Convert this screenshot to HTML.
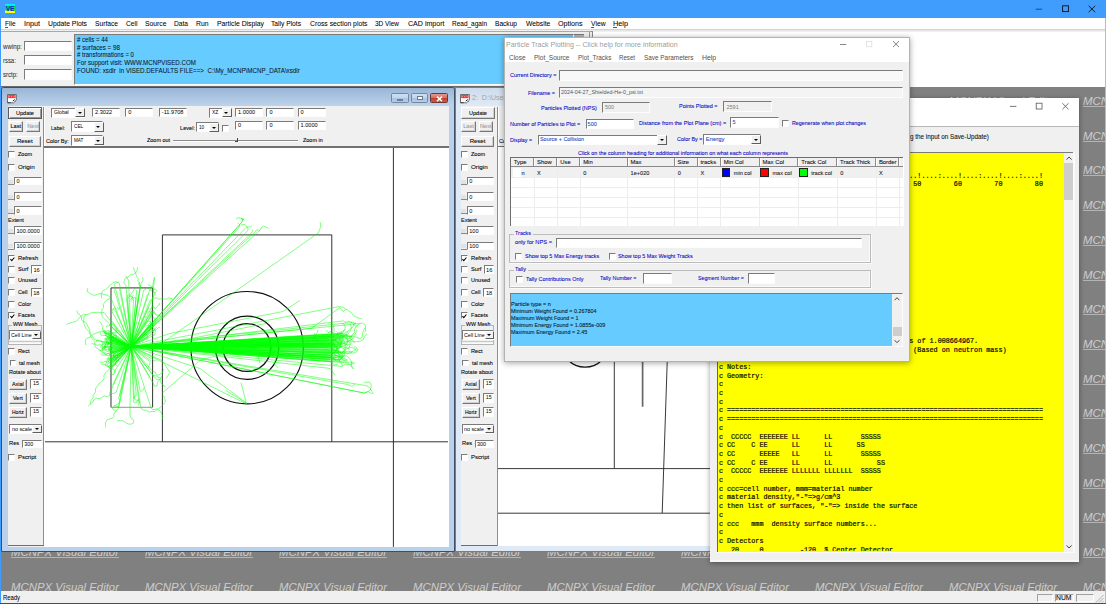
<!DOCTYPE html>
<html lang="en"><head><meta charset="utf-8"><title>MCNPX Visual Editor</title><style>
html,body{margin:0;padding:0}
body{width:1106px;height:604px;overflow:hidden;position:relative;background:#f0f0f0;font-family:"Liberation Sans",sans-serif;color:#000}
body>div,#mdi>div,body>svg{position:absolute}
div{position:absolute;box-sizing:border-box}
.t{position:absolute;white-space:pre;line-height:1.2;transform-origin:0 0;display:block;-webkit-text-stroke:0.09px currentColor}
.wm{position:absolute;white-space:pre;line-height:1;font-style:italic;color:#cdcdcd;text-decoration:underline;text-decoration-color:#b4b4b4;text-underline-offset:1.3px;text-decoration-thickness:0.9px;transform-origin:0 0;display:block}
.m{position:absolute;left:0;white-space:pre;line-height:1.2;font-family:"Liberation Mono",monospace;color:#101005;display:block;-webkit-text-stroke:0.22px #101005}
.sk{border:1px solid;border-color:#7b7b7b #fdfdfd #fdfdfd #7b7b7b}
.btn{background:#f0f0f0;border:1px solid;border-color:#fff #777 #777 #fff;box-shadow:inset -1px -1px 0 #d0d0d0}
.btn.dflt{border-color:#5c5c5c;box-shadow:inset 1px 1px 0 #fff,inset -1px -1px 0 #9a9a9a}
.cbtn{background:#f0f0f0;border:1px solid;border-color:#fff #5e5e5e #5e5e5e #fff}
.tri{position:absolute;width:0;height:0;border-left:2.5px solid transparent;border-right:2.5px solid transparent;border-top:2.5px solid #000}
</style></head><body>
<div id="mdi" style="left:1px;top:86px;width:1104px;height:505px;background:#808080;overflow:hidden;border-top:1px solid #696969">
<span class="wm" style="left:10px;top:9.09px;font-size:11.0px;transform:scaleX(1.0351)">MCNPX Visual Editor</span>
<span class="wm" style="left:144px;top:9.09px;font-size:11.0px;transform:scaleX(1.0351)">MCNPX Visual Editor</span>
<span class="wm" style="left:278px;top:9.09px;font-size:11.0px;transform:scaleX(1.0351)">MCNPX Visual Editor</span>
<span class="wm" style="left:412px;top:9.09px;font-size:11.0px;transform:scaleX(1.0351)">MCNPX Visual Editor</span>
<span class="wm" style="left:546px;top:9.09px;font-size:11.0px;transform:scaleX(1.0351)">MCNPX Visual Editor</span>
<span class="wm" style="left:680px;top:9.09px;font-size:11.0px;transform:scaleX(1.0351)">MCNPX Visual Editor</span>
<span class="wm" style="left:814px;top:9.09px;font-size:11.0px;transform:scaleX(1.0351)">MCNPX Visual Editor</span>
<span class="wm" style="left:948px;top:9.09px;font-size:11.0px;transform:scaleX(1.0351)">MCNPX Visual Editor</span>
<span class="wm" style="left:1082px;top:9.09px;font-size:11.0px;transform:scaleX(1.0351)">MCNPX Visual Editor</span>
<span class="wm" style="left:10px;top:43.79px;font-size:11.0px;transform:scaleX(1.0351)">MCNPX Visual Editor</span>
<span class="wm" style="left:144px;top:43.79px;font-size:11.0px;transform:scaleX(1.0351)">MCNPX Visual Editor</span>
<span class="wm" style="left:278px;top:43.79px;font-size:11.0px;transform:scaleX(1.0351)">MCNPX Visual Editor</span>
<span class="wm" style="left:412px;top:43.79px;font-size:11.0px;transform:scaleX(1.0351)">MCNPX Visual Editor</span>
<span class="wm" style="left:546px;top:43.79px;font-size:11.0px;transform:scaleX(1.0351)">MCNPX Visual Editor</span>
<span class="wm" style="left:680px;top:43.79px;font-size:11.0px;transform:scaleX(1.0351)">MCNPX Visual Editor</span>
<span class="wm" style="left:814px;top:43.79px;font-size:11.0px;transform:scaleX(1.0351)">MCNPX Visual Editor</span>
<span class="wm" style="left:948px;top:43.79px;font-size:11.0px;transform:scaleX(1.0351)">MCNPX Visual Editor</span>
<span class="wm" style="left:1082px;top:43.79px;font-size:11.0px;transform:scaleX(1.0351)">MCNPX Visual Editor</span>
<span class="wm" style="left:10px;top:78.49px;font-size:11.0px;transform:scaleX(1.0351)">MCNPX Visual Editor</span>
<span class="wm" style="left:144px;top:78.49px;font-size:11.0px;transform:scaleX(1.0351)">MCNPX Visual Editor</span>
<span class="wm" style="left:278px;top:78.49px;font-size:11.0px;transform:scaleX(1.0351)">MCNPX Visual Editor</span>
<span class="wm" style="left:412px;top:78.49px;font-size:11.0px;transform:scaleX(1.0351)">MCNPX Visual Editor</span>
<span class="wm" style="left:546px;top:78.49px;font-size:11.0px;transform:scaleX(1.0351)">MCNPX Visual Editor</span>
<span class="wm" style="left:680px;top:78.49px;font-size:11.0px;transform:scaleX(1.0351)">MCNPX Visual Editor</span>
<span class="wm" style="left:814px;top:78.49px;font-size:11.0px;transform:scaleX(1.0351)">MCNPX Visual Editor</span>
<span class="wm" style="left:948px;top:78.49px;font-size:11.0px;transform:scaleX(1.0351)">MCNPX Visual Editor</span>
<span class="wm" style="left:1082px;top:78.49px;font-size:11.0px;transform:scaleX(1.0351)">MCNPX Visual Editor</span>
<span class="wm" style="left:10px;top:113.19px;font-size:11.0px;transform:scaleX(1.0351)">MCNPX Visual Editor</span>
<span class="wm" style="left:144px;top:113.19px;font-size:11.0px;transform:scaleX(1.0351)">MCNPX Visual Editor</span>
<span class="wm" style="left:278px;top:113.19px;font-size:11.0px;transform:scaleX(1.0351)">MCNPX Visual Editor</span>
<span class="wm" style="left:412px;top:113.19px;font-size:11.0px;transform:scaleX(1.0351)">MCNPX Visual Editor</span>
<span class="wm" style="left:546px;top:113.19px;font-size:11.0px;transform:scaleX(1.0351)">MCNPX Visual Editor</span>
<span class="wm" style="left:680px;top:113.19px;font-size:11.0px;transform:scaleX(1.0351)">MCNPX Visual Editor</span>
<span class="wm" style="left:814px;top:113.19px;font-size:11.0px;transform:scaleX(1.0351)">MCNPX Visual Editor</span>
<span class="wm" style="left:948px;top:113.19px;font-size:11.0px;transform:scaleX(1.0351)">MCNPX Visual Editor</span>
<span class="wm" style="left:1082px;top:113.19px;font-size:11.0px;transform:scaleX(1.0351)">MCNPX Visual Editor</span>
<span class="wm" style="left:10px;top:147.89px;font-size:11.0px;transform:scaleX(1.0351)">MCNPX Visual Editor</span>
<span class="wm" style="left:144px;top:147.89px;font-size:11.0px;transform:scaleX(1.0351)">MCNPX Visual Editor</span>
<span class="wm" style="left:278px;top:147.89px;font-size:11.0px;transform:scaleX(1.0351)">MCNPX Visual Editor</span>
<span class="wm" style="left:412px;top:147.89px;font-size:11.0px;transform:scaleX(1.0351)">MCNPX Visual Editor</span>
<span class="wm" style="left:546px;top:147.89px;font-size:11.0px;transform:scaleX(1.0351)">MCNPX Visual Editor</span>
<span class="wm" style="left:680px;top:147.89px;font-size:11.0px;transform:scaleX(1.0351)">MCNPX Visual Editor</span>
<span class="wm" style="left:814px;top:147.89px;font-size:11.0px;transform:scaleX(1.0351)">MCNPX Visual Editor</span>
<span class="wm" style="left:948px;top:147.89px;font-size:11.0px;transform:scaleX(1.0351)">MCNPX Visual Editor</span>
<span class="wm" style="left:1082px;top:147.89px;font-size:11.0px;transform:scaleX(1.0351)">MCNPX Visual Editor</span>
<span class="wm" style="left:10px;top:182.59px;font-size:11.0px;transform:scaleX(1.0351)">MCNPX Visual Editor</span>
<span class="wm" style="left:144px;top:182.59px;font-size:11.0px;transform:scaleX(1.0351)">MCNPX Visual Editor</span>
<span class="wm" style="left:278px;top:182.59px;font-size:11.0px;transform:scaleX(1.0351)">MCNPX Visual Editor</span>
<span class="wm" style="left:412px;top:182.59px;font-size:11.0px;transform:scaleX(1.0351)">MCNPX Visual Editor</span>
<span class="wm" style="left:546px;top:182.59px;font-size:11.0px;transform:scaleX(1.0351)">MCNPX Visual Editor</span>
<span class="wm" style="left:680px;top:182.59px;font-size:11.0px;transform:scaleX(1.0351)">MCNPX Visual Editor</span>
<span class="wm" style="left:814px;top:182.59px;font-size:11.0px;transform:scaleX(1.0351)">MCNPX Visual Editor</span>
<span class="wm" style="left:948px;top:182.59px;font-size:11.0px;transform:scaleX(1.0351)">MCNPX Visual Editor</span>
<span class="wm" style="left:1082px;top:182.59px;font-size:11.0px;transform:scaleX(1.0351)">MCNPX Visual Editor</span>
<span class="wm" style="left:10px;top:217.29px;font-size:11.0px;transform:scaleX(1.0351)">MCNPX Visual Editor</span>
<span class="wm" style="left:144px;top:217.29px;font-size:11.0px;transform:scaleX(1.0351)">MCNPX Visual Editor</span>
<span class="wm" style="left:278px;top:217.29px;font-size:11.0px;transform:scaleX(1.0351)">MCNPX Visual Editor</span>
<span class="wm" style="left:412px;top:217.29px;font-size:11.0px;transform:scaleX(1.0351)">MCNPX Visual Editor</span>
<span class="wm" style="left:546px;top:217.29px;font-size:11.0px;transform:scaleX(1.0351)">MCNPX Visual Editor</span>
<span class="wm" style="left:680px;top:217.29px;font-size:11.0px;transform:scaleX(1.0351)">MCNPX Visual Editor</span>
<span class="wm" style="left:814px;top:217.29px;font-size:11.0px;transform:scaleX(1.0351)">MCNPX Visual Editor</span>
<span class="wm" style="left:948px;top:217.29px;font-size:11.0px;transform:scaleX(1.0351)">MCNPX Visual Editor</span>
<span class="wm" style="left:1082px;top:217.29px;font-size:11.0px;transform:scaleX(1.0351)">MCNPX Visual Editor</span>
<span class="wm" style="left:10px;top:251.99px;font-size:11.0px;transform:scaleX(1.0351)">MCNPX Visual Editor</span>
<span class="wm" style="left:144px;top:251.99px;font-size:11.0px;transform:scaleX(1.0351)">MCNPX Visual Editor</span>
<span class="wm" style="left:278px;top:251.99px;font-size:11.0px;transform:scaleX(1.0351)">MCNPX Visual Editor</span>
<span class="wm" style="left:412px;top:251.99px;font-size:11.0px;transform:scaleX(1.0351)">MCNPX Visual Editor</span>
<span class="wm" style="left:546px;top:251.99px;font-size:11.0px;transform:scaleX(1.0351)">MCNPX Visual Editor</span>
<span class="wm" style="left:680px;top:251.99px;font-size:11.0px;transform:scaleX(1.0351)">MCNPX Visual Editor</span>
<span class="wm" style="left:814px;top:251.99px;font-size:11.0px;transform:scaleX(1.0351)">MCNPX Visual Editor</span>
<span class="wm" style="left:948px;top:251.99px;font-size:11.0px;transform:scaleX(1.0351)">MCNPX Visual Editor</span>
<span class="wm" style="left:1082px;top:251.99px;font-size:11.0px;transform:scaleX(1.0351)">MCNPX Visual Editor</span>
<span class="wm" style="left:10px;top:286.69px;font-size:11.0px;transform:scaleX(1.0351)">MCNPX Visual Editor</span>
<span class="wm" style="left:144px;top:286.69px;font-size:11.0px;transform:scaleX(1.0351)">MCNPX Visual Editor</span>
<span class="wm" style="left:278px;top:286.69px;font-size:11.0px;transform:scaleX(1.0351)">MCNPX Visual Editor</span>
<span class="wm" style="left:412px;top:286.69px;font-size:11.0px;transform:scaleX(1.0351)">MCNPX Visual Editor</span>
<span class="wm" style="left:546px;top:286.69px;font-size:11.0px;transform:scaleX(1.0351)">MCNPX Visual Editor</span>
<span class="wm" style="left:680px;top:286.69px;font-size:11.0px;transform:scaleX(1.0351)">MCNPX Visual Editor</span>
<span class="wm" style="left:814px;top:286.69px;font-size:11.0px;transform:scaleX(1.0351)">MCNPX Visual Editor</span>
<span class="wm" style="left:948px;top:286.69px;font-size:11.0px;transform:scaleX(1.0351)">MCNPX Visual Editor</span>
<span class="wm" style="left:1082px;top:286.69px;font-size:11.0px;transform:scaleX(1.0351)">MCNPX Visual Editor</span>
<span class="wm" style="left:10px;top:321.39px;font-size:11.0px;transform:scaleX(1.0351)">MCNPX Visual Editor</span>
<span class="wm" style="left:144px;top:321.39px;font-size:11.0px;transform:scaleX(1.0351)">MCNPX Visual Editor</span>
<span class="wm" style="left:278px;top:321.39px;font-size:11.0px;transform:scaleX(1.0351)">MCNPX Visual Editor</span>
<span class="wm" style="left:412px;top:321.39px;font-size:11.0px;transform:scaleX(1.0351)">MCNPX Visual Editor</span>
<span class="wm" style="left:546px;top:321.39px;font-size:11.0px;transform:scaleX(1.0351)">MCNPX Visual Editor</span>
<span class="wm" style="left:680px;top:321.39px;font-size:11.0px;transform:scaleX(1.0351)">MCNPX Visual Editor</span>
<span class="wm" style="left:814px;top:321.39px;font-size:11.0px;transform:scaleX(1.0351)">MCNPX Visual Editor</span>
<span class="wm" style="left:948px;top:321.39px;font-size:11.0px;transform:scaleX(1.0351)">MCNPX Visual Editor</span>
<span class="wm" style="left:1082px;top:321.39px;font-size:11.0px;transform:scaleX(1.0351)">MCNPX Visual Editor</span>
<span class="wm" style="left:10px;top:356.09px;font-size:11.0px;transform:scaleX(1.0351)">MCNPX Visual Editor</span>
<span class="wm" style="left:144px;top:356.09px;font-size:11.0px;transform:scaleX(1.0351)">MCNPX Visual Editor</span>
<span class="wm" style="left:278px;top:356.09px;font-size:11.0px;transform:scaleX(1.0351)">MCNPX Visual Editor</span>
<span class="wm" style="left:412px;top:356.09px;font-size:11.0px;transform:scaleX(1.0351)">MCNPX Visual Editor</span>
<span class="wm" style="left:546px;top:356.09px;font-size:11.0px;transform:scaleX(1.0351)">MCNPX Visual Editor</span>
<span class="wm" style="left:680px;top:356.09px;font-size:11.0px;transform:scaleX(1.0351)">MCNPX Visual Editor</span>
<span class="wm" style="left:814px;top:356.09px;font-size:11.0px;transform:scaleX(1.0351)">MCNPX Visual Editor</span>
<span class="wm" style="left:948px;top:356.09px;font-size:11.0px;transform:scaleX(1.0351)">MCNPX Visual Editor</span>
<span class="wm" style="left:1082px;top:356.09px;font-size:11.0px;transform:scaleX(1.0351)">MCNPX Visual Editor</span>
<span class="wm" style="left:10px;top:390.79px;font-size:11.0px;transform:scaleX(1.0351)">MCNPX Visual Editor</span>
<span class="wm" style="left:144px;top:390.79px;font-size:11.0px;transform:scaleX(1.0351)">MCNPX Visual Editor</span>
<span class="wm" style="left:278px;top:390.79px;font-size:11.0px;transform:scaleX(1.0351)">MCNPX Visual Editor</span>
<span class="wm" style="left:412px;top:390.79px;font-size:11.0px;transform:scaleX(1.0351)">MCNPX Visual Editor</span>
<span class="wm" style="left:546px;top:390.79px;font-size:11.0px;transform:scaleX(1.0351)">MCNPX Visual Editor</span>
<span class="wm" style="left:680px;top:390.79px;font-size:11.0px;transform:scaleX(1.0351)">MCNPX Visual Editor</span>
<span class="wm" style="left:814px;top:390.79px;font-size:11.0px;transform:scaleX(1.0351)">MCNPX Visual Editor</span>
<span class="wm" style="left:948px;top:390.79px;font-size:11.0px;transform:scaleX(1.0351)">MCNPX Visual Editor</span>
<span class="wm" style="left:1082px;top:390.79px;font-size:11.0px;transform:scaleX(1.0351)">MCNPX Visual Editor</span>
<span class="wm" style="left:10px;top:425.49px;font-size:11.0px;transform:scaleX(1.0351)">MCNPX Visual Editor</span>
<span class="wm" style="left:144px;top:425.49px;font-size:11.0px;transform:scaleX(1.0351)">MCNPX Visual Editor</span>
<span class="wm" style="left:278px;top:425.49px;font-size:11.0px;transform:scaleX(1.0351)">MCNPX Visual Editor</span>
<span class="wm" style="left:412px;top:425.49px;font-size:11.0px;transform:scaleX(1.0351)">MCNPX Visual Editor</span>
<span class="wm" style="left:546px;top:425.49px;font-size:11.0px;transform:scaleX(1.0351)">MCNPX Visual Editor</span>
<span class="wm" style="left:680px;top:425.49px;font-size:11.0px;transform:scaleX(1.0351)">MCNPX Visual Editor</span>
<span class="wm" style="left:814px;top:425.49px;font-size:11.0px;transform:scaleX(1.0351)">MCNPX Visual Editor</span>
<span class="wm" style="left:948px;top:425.49px;font-size:11.0px;transform:scaleX(1.0351)">MCNPX Visual Editor</span>
<span class="wm" style="left:1082px;top:425.49px;font-size:11.0px;transform:scaleX(1.0351)">MCNPX Visual Editor</span>
<span class="wm" style="left:10px;top:460.19px;font-size:11.0px;transform:scaleX(1.0351)">MCNPX Visual Editor</span>
<span class="wm" style="left:144px;top:460.19px;font-size:11.0px;transform:scaleX(1.0351)">MCNPX Visual Editor</span>
<span class="wm" style="left:278px;top:460.19px;font-size:11.0px;transform:scaleX(1.0351)">MCNPX Visual Editor</span>
<span class="wm" style="left:412px;top:460.19px;font-size:11.0px;transform:scaleX(1.0351)">MCNPX Visual Editor</span>
<span class="wm" style="left:546px;top:460.19px;font-size:11.0px;transform:scaleX(1.0351)">MCNPX Visual Editor</span>
<span class="wm" style="left:680px;top:460.19px;font-size:11.0px;transform:scaleX(1.0351)">MCNPX Visual Editor</span>
<span class="wm" style="left:814px;top:460.19px;font-size:11.0px;transform:scaleX(1.0351)">MCNPX Visual Editor</span>
<span class="wm" style="left:948px;top:460.19px;font-size:11.0px;transform:scaleX(1.0351)">MCNPX Visual Editor</span>
<span class="wm" style="left:1082px;top:460.19px;font-size:11.0px;transform:scaleX(1.0351)">MCNPX Visual Editor</span>
<span class="wm" style="left:10px;top:494.89px;font-size:11.0px;transform:scaleX(1.0351)">MCNPX Visual Editor</span>
<span class="wm" style="left:144px;top:494.89px;font-size:11.0px;transform:scaleX(1.0351)">MCNPX Visual Editor</span>
<span class="wm" style="left:278px;top:494.89px;font-size:11.0px;transform:scaleX(1.0351)">MCNPX Visual Editor</span>
<span class="wm" style="left:412px;top:494.89px;font-size:11.0px;transform:scaleX(1.0351)">MCNPX Visual Editor</span>
<span class="wm" style="left:546px;top:494.89px;font-size:11.0px;transform:scaleX(1.0351)">MCNPX Visual Editor</span>
<span class="wm" style="left:680px;top:494.89px;font-size:11.0px;transform:scaleX(1.0351)">MCNPX Visual Editor</span>
<span class="wm" style="left:814px;top:494.89px;font-size:11.0px;transform:scaleX(1.0351)">MCNPX Visual Editor</span>
<span class="wm" style="left:948px;top:494.89px;font-size:11.0px;transform:scaleX(1.0351)">MCNPX Visual Editor</span>
<span class="wm" style="left:1082px;top:494.89px;font-size:11.0px;transform:scaleX(1.0351)">MCNPX Visual Editor</span>
</div>
<div style="left:0.00px;top:0.00px;width:1106.00px;height:18.30px;background:#409dfd;"></div>
<div style="left:0.00px;top:0.00px;width:1.00px;height:604.00px;background:#409dfd;"></div>
<div style="left:1105.00px;top:18.00px;width:1.00px;height:586.00px;background:#8ec4ff;"></div>
<div style="left:0.00px;top:603.00px;width:1106.00px;height:1.00px;background:#4c4c4c;z-index:5;"></div>
<div style="left:5.10px;top:4.00px;width:9.70px;height:9.20px;background:linear-gradient(#00f6ff 0%,#00f6ff 14%,#08e030 22%,#08e030 68%,#ffff00 78%,#ffff00 100%);overflow:hidden;"><span style="position:absolute;left:0.7px;top:1.2px;font:bold 6.6px/7px 'Liberation Sans',sans-serif;color:#0a22d0;letter-spacing:-0.3px">VE</span></div>
<svg style="position:absolute;left:1020px;top:0" width="86" height="18" viewBox="0 0 86 18"><g stroke="#101010" stroke-width="0.9" fill="none"><path d="M15.7 9.2H22" stroke="#174a86" stroke-width="1"/><rect x="42.6" y="5.8" width="5.8" height="5.8"/><path d="M68.6 5.8L75.2 12.2M75.2 5.8L68.6 12.2"/></g></svg>
<div style="left:1.00px;top:18.30px;width:1104.00px;height:12.20px;background:#fff;"></div>
<span class="t" style="left:5.00px;top:18.85px;font-size:7.5px;color:#000;transform:scaleX(0.8688);-webkit-text-stroke:0.05px;">File</span>
<span class="t" style="left:23.50px;top:18.85px;font-size:7.5px;color:#000;transform:scaleX(0.9592);-webkit-text-stroke:0.05px;">Input</span>
<span class="t" style="left:47.50px;top:18.85px;font-size:7.5px;color:#000;transform:scaleX(0.9082);-webkit-text-stroke:0.05px;">Update Plots</span>
<span class="t" style="left:94.50px;top:18.85px;font-size:7.5px;color:#000;transform:scaleX(0.8898);-webkit-text-stroke:0.05px;">Surface</span>
<span class="t" style="left:125.50px;top:18.85px;font-size:7.5px;color:#000;transform:scaleX(0.8901);-webkit-text-stroke:0.05px;">Cell</span>
<span class="t" style="left:145.00px;top:18.85px;font-size:7.5px;color:#000;transform:scaleX(0.9047);-webkit-text-stroke:0.05px;">Source</span>
<span class="t" style="left:174.00px;top:18.85px;font-size:7.5px;color:#000;transform:scaleX(0.8837);-webkit-text-stroke:0.05px;">Data</span>
<span class="t" style="left:196.00px;top:18.85px;font-size:7.5px;color:#000;transform:scaleX(0.9085);-webkit-text-stroke:0.05px;">Run</span>
<span class="t" style="left:216.50px;top:18.85px;font-size:7.5px;color:#000;transform:scaleX(0.9094);-webkit-text-stroke:0.05px;">Particle Display</span>
<span class="t" style="left:271.00px;top:18.85px;font-size:7.5px;color:#000;transform:scaleX(0.8886);-webkit-text-stroke:0.05px;">Tally Plots</span>
<span class="t" style="left:309.50px;top:18.85px;font-size:7.5px;color:#000;transform:scaleX(0.9075);-webkit-text-stroke:0.05px;">Cross section plots</span>
<span class="t" style="left:375.00px;top:18.85px;font-size:7.5px;color:#000;transform:scaleX(0.8635);-webkit-text-stroke:0.05px;">3D View</span>
<span class="t" style="left:407.50px;top:18.85px;font-size:7.5px;color:#000;transform:scaleX(0.9418);-webkit-text-stroke:0.05px;">CAD import</span>
<span class="t" style="left:452.00px;top:18.85px;font-size:7.5px;color:#000;transform:scaleX(0.8652);-webkit-text-stroke:0.05px;">Read_again</span>
<span class="t" style="left:495.00px;top:18.85px;font-size:7.5px;color:#000;transform:scaleX(0.8794);-webkit-text-stroke:0.05px;">Backup</span>
<span class="t" style="left:525.70px;top:18.85px;font-size:7.5px;color:#000;transform:scaleX(0.9014);-webkit-text-stroke:0.05px;">Website</span>
<span class="t" style="left:558.00px;top:18.85px;font-size:7.5px;color:#000;transform:scaleX(0.9479);-webkit-text-stroke:0.05px;">Options</span>
<span class="t" style="left:590.50px;top:18.85px;font-size:7.5px;color:#000;transform:scaleX(0.8994);-webkit-text-stroke:0.05px;">View</span>
<span class="t" style="left:613.00px;top:18.85px;font-size:7.5px;color:#000;transform:scaleX(0.9724);-webkit-text-stroke:0.05px;">Help</span>
<div style="left:5.00px;top:27.00px;width:3.20px;height:0.60px;background:#555;"></div>
<div style="left:590.50px;top:27.00px;width:3.80px;height:0.60px;background:#555;"></div>
<div style="left:613.00px;top:27.00px;width:4.40px;height:0.60px;background:#555;"></div>
<div style="left:1.00px;top:29.00px;width:1104.00px;height:0.90px;background:#d4d4d4;"></div>
<div style="left:1.00px;top:31.30px;width:591.00px;height:0.90px;background:#a8a8a8;"></div>
<div style="left:592.00px;top:31.50px;width:513.00px;height:55.00px;background:#fff;"></div>
<div style="left:593.00px;top:30.40px;width:512.00px;height:0.70px;background:#e6e6e6;"></div>
<div style="left:591.20px;top:30.50px;width:1.60px;height:6.50px;background:#8a8a8a;"></div>
<div style="left:1.00px;top:32.20px;width:590.50px;height:54.00px;background:#f0f0f0;"></div>
<span class="t" style="left:3.20px;top:42.89px;font-size:6.3px;color:#222;transform:scaleX(0.9763);-webkit-text-stroke:0;">wwinp:</span>
<div class="sk" style="left:24.00px;top:40.70px;width:47.50px;height:10.60px;background:#fff;"></div>
<span class="t" style="left:3.20px;top:56.89px;font-size:6.3px;color:#222;transform:scaleX(0.9376);-webkit-text-stroke:0;">rssa:</span>
<div class="sk" style="left:24.00px;top:55.00px;width:47.50px;height:10.30px;background:#fff;"></div>
<span class="t" style="left:3.20px;top:71.09px;font-size:6.3px;color:#222;transform:scaleX(0.9609);-webkit-text-stroke:0;">srctp:</span>
<div class="sk" style="left:24.00px;top:69.00px;width:47.50px;height:10.50px;background:#fff;"></div>
<div style="left:573.20px;top:34.40px;width:10.40px;height:50.00px;background:#b6b6b6;border-top:1px solid #7b7b7b;"></div>
<div style="left:589.20px;top:32.20px;width:0.80px;height:54.00px;background:#9a9a9a;"></div>
<div class="sk" style="left:74.30px;top:34.40px;width:500.00px;height:50.20px;background:#66ccff;"></div>
<span class="t" style="left:76.50px;top:36.31px;font-size:6.6px;color:#10141c;transform:scaleX(0.9234);-webkit-text-stroke:0.06px;"># cells = 44</span>
<span class="t" style="left:76.50px;top:43.86px;font-size:6.6px;color:#10141c;transform:scaleX(0.9490);-webkit-text-stroke:0.06px;"># surfaces = 98</span>
<span class="t" style="left:76.50px;top:51.41px;font-size:6.6px;color:#10141c;transform:scaleX(0.9167);-webkit-text-stroke:0.06px;"># transformations = 0</span>
<span class="t" style="left:76.50px;top:58.96px;font-size:6.6px;color:#10141c;transform:scaleX(0.9352);-webkit-text-stroke:0.06px;">For support visit: WWW.MCNPVISED.COM</span>
<span class="t" style="left:76.50px;top:66.51px;font-size:6.6px;color:#10141c;transform:scaleX(0.9464);-webkit-text-stroke:0.06px;">FOUND: xsdir  in VISED.DEFAULTS FILE==&gt;  C:\My_MCNP\MCNP_DATA\xsdir</span>
<div style="left:455.00px;top:87.00px;width:450.00px;height:465.00px;background:#dfeaf6;border:1px solid #6f7f92;box-sizing:border-box;border-radius:3px 3px 0 0;"></div>
<div style="left:456.00px;top:88.00px;width:448.00px;height:18.00px;background:linear-gradient(#cddbec,#e0eaf6);"></div>
<svg style="position:absolute;left:459.9px;top:93.5px" width="10.5" height="10" viewBox="0 0 10.5 10"><path d="M0.5 0.5H9.3V6.2L6.6 8.8H0.5Z" fill="#fff" stroke="#606060" stroke-width="0.9"/><rect x="1.2" y="1.1" width="7.3" height="3" fill="#ff2a2a"/><path d="M1.8 2.7H8.2" stroke="#fff" stroke-width="0.6" stroke-dasharray="1.1 1.3"/><path d="M0.7 8.7H4" stroke="#111" stroke-width="0.9" stroke-dasharray="1.1 0.6"/><path d="M5.8 7L7.8 5.6" stroke="#222" stroke-width="1"/><circle cx="8.4" cy="7.4" r="0.55" fill="#1f9f9f"/></svg>
<span class="t" style="left:472.00px;top:93.80px;font-size:7.1px;color:#a4a4a4;-webkit-text-stroke:0;">2:  D:\Users\MCNP\Shielded-He-0</span>
<div style="left:461.00px;top:106.40px;width:438.00px;height:440.00px;background:#f0f0f0;"></div>
<div style="left:498.00px;top:145.60px;width:401.00px;height:400.80px;background:#fff;border-top:1.6px solid #707070;box-sizing:border-box;"></div>
<div style="left:496.60px;top:107.00px;width:1.00px;height:439.40px;background:#8e8e8e;"></div>
<div style="left:497.60px;top:107.00px;width:0.80px;height:39.00px;background:#fff;"></div>
<div style="left:461.00px;top:544.60px;width:36.00px;height:1.00px;background:#6e6e6e;"></div>
<div class="btn" style="left:460.80px;top:107.30px;width:33.90px;height:11.50px;"></div>
<span class="t" style="left:468.85px;top:109.53px;font-size:6.0px;color:#000;transform:scaleX(0.9200);">Update</span>
<div class="btn" style="left:461.30px;top:121.20px;width:14.40px;height:10.80px;"></div>
<span class="t" style="left:463.21px;top:123.33px;font-size:5.6px;color:#9a9a9a;">Last</span>
<div class="btn" style="left:478.70px;top:121.20px;width:14.20px;height:10.80px;"></div>
<span class="t" style="left:480.04px;top:123.33px;font-size:5.6px;color:#9a9a9a;">Next</span>
<div class="btn" style="left:461.30px;top:136.40px;width:32.40px;height:10.60px;"></div>
<span class="t" style="left:469.66px;top:138.18px;font-size:6.0px;color:#000;">Reset</span>
<div class="sk" style="left:460.90px;top:151.00px;width:6.80px;height:6.80px;background:#fff;"></div>
<span class="t" style="left:470.60px;top:150.68px;font-size:6.0px;transform:scaleX(0.9193);">Zoom</span>
<div class="sk" style="left:460.90px;top:163.80px;width:6.80px;height:6.80px;background:#fff;"></div>
<span class="t" style="left:470.60px;top:163.58px;font-size:6.0px;transform:scaleX(1.0371);">Origin</span>
<div style="left:461.10px;top:179.70px;width:4.60px;height:4.20px;background:#e2e2e2;"></div>
<div style="left:460.90px;top:183.90px;width:6.00px;height:0.80px;background:#8a8a8a;"></div>
<div class="sk" style="left:466.60px;top:176.70px;width:27.80px;height:8.60px;background:#fff;"></div>
<span class="t" style="left:469.20px;top:178.33px;font-size:5.6px;color:#000;-webkit-text-stroke:0;">0</span>
<div style="left:461.10px;top:194.90px;width:4.60px;height:4.20px;background:#e2e2e2;"></div>
<div style="left:460.90px;top:199.10px;width:6.00px;height:0.80px;background:#8a8a8a;"></div>
<div class="sk" style="left:466.60px;top:192.00px;width:27.80px;height:8.50px;background:#fff;"></div>
<span class="t" style="left:469.20px;top:193.58px;font-size:5.6px;color:#000;-webkit-text-stroke:0;">0</span>
<div style="left:461.10px;top:209.20px;width:4.60px;height:4.20px;background:#e2e2e2;"></div>
<div style="left:460.90px;top:213.40px;width:6.00px;height:0.80px;background:#8a8a8a;"></div>
<div class="sk" style="left:466.60px;top:206.10px;width:27.80px;height:8.70px;background:#fff;"></div>
<span class="t" style="left:469.20px;top:207.78px;font-size:5.6px;color:#000;-webkit-text-stroke:0;">0</span>
<span class="t" style="left:460.90px;top:216.88px;font-size:6.0px;transform:scaleX(0.9289);">Extent</span>
<div style="left:461.10px;top:229.20px;width:4.60px;height:4.20px;background:#e2e2e2;"></div>
<div style="left:460.90px;top:233.40px;width:6.00px;height:0.80px;background:#8a8a8a;"></div>
<div class="sk" style="left:466.60px;top:226.20px;width:27.80px;height:8.60px;background:#fff;"></div>
<span class="t" style="left:469.20px;top:227.83px;font-size:5.6px;color:#000;-webkit-text-stroke:0;">100</span>
<div style="left:461.10px;top:244.30px;width:4.60px;height:4.20px;background:#e2e2e2;"></div>
<div style="left:460.90px;top:248.50px;width:6.00px;height:0.80px;background:#8a8a8a;"></div>
<div class="sk" style="left:466.60px;top:241.50px;width:27.80px;height:8.40px;background:#fff;"></div>
<span class="t" style="left:469.20px;top:243.03px;font-size:5.6px;color:#000;-webkit-text-stroke:0;">100</span>
<div class="sk" style="left:460.90px;top:255.30px;width:6.80px;height:6.80px;background:#fff;"><svg width="7" height="7" viewBox="0 0 7 7" style="position:absolute;left:-0.5px;top:-0.5px"><path d="M1.4 3.1 L2.8 4.6 L5.4 1.5" stroke="#000" stroke-width="1.05" fill="none"/></svg></div>
<span class="t" style="left:470.60px;top:255.08px;font-size:6.0px;transform:scaleX(0.9567);">Refresh</span>
<div class="sk" style="left:460.90px;top:266.30px;width:6.80px;height:6.80px;background:#fff;"></div>
<span class="t" style="left:470.60px;top:265.98px;font-size:6.0px;transform:scaleX(0.9451);">Surf</span>
<div class="sk" style="left:483.70px;top:265.00px;width:10.70px;height:8.90px;background:#fff;"></div>
<span class="t" style="left:486.10px;top:266.72px;font-size:5.7px;color:#000;-webkit-text-stroke:0;">16</span>
<div class="sk" style="left:460.90px;top:277.40px;width:6.80px;height:6.80px;background:#fff;"></div>
<span class="t" style="left:470.60px;top:277.08px;font-size:6.0px;transform:scaleX(0.9235);">Unused</span>
<div class="sk" style="left:460.90px;top:289.00px;width:6.80px;height:6.80px;background:#fff;"></div>
<span class="t" style="left:470.60px;top:288.68px;font-size:6.0px;transform:scaleX(0.9094);">Cell</span>
<div class="sk" style="left:483.30px;top:287.90px;width:11.10px;height:9.00px;background:#fff;"></div>
<span class="t" style="left:485.90px;top:289.67px;font-size:5.7px;color:#000;-webkit-text-stroke:0;">18</span>
<div class="sk" style="left:460.90px;top:300.90px;width:6.80px;height:6.80px;background:#fff;"></div>
<span class="t" style="left:470.60px;top:300.58px;font-size:6.0px;transform:scaleX(0.9136);">Color</span>
<div class="sk" style="left:460.90px;top:312.10px;width:6.80px;height:6.80px;background:#fff;"><svg width="7" height="7" viewBox="0 0 7 7" style="position:absolute;left:-0.5px;top:-0.5px"><path d="M1.4 3.1 L2.8 4.6 L5.4 1.5" stroke="#000" stroke-width="1.05" fill="none"/></svg></div>
<span class="t" style="left:470.60px;top:311.68px;font-size:6.0px;transform:scaleX(0.9497);">Facets</span>
<div style="left:460.90px;top:324.70px;width:33.50px;height:20.50px;border:1px solid #b4b4b4;box-sizing:border-box;box-shadow:inset 0 -1px 0 #fafafa;"></div>
<div style="left:465.10px;top:321.00px;width:26.00px;height:6.00px;background:#f0f0f0;"></div>
<span class="t" style="left:465.90px;top:320.73px;font-size:5.6px;transform:scaleX(0.9488);">WW Mesh</span>
<div class="sk" style="left:461.50px;top:330.00px;width:32.50px;height:9.60px;background:#fff;"></div>
<span class="t" style="left:464.00px;top:331.51px;font-size:5.3px;color:#000;transform:scaleX(0.9989);-webkit-text-stroke:0;">Cell Line</span>
<div class="cbtn" style="left:484.80px;top:330.80px;width:9.40px;height:8.40px;"><i class="tri" style="left:1.40px;top:2.50px"></i></div>
<div style="left:461.90px;top:340.60px;width:31.50px;height:0.70px;background:#c8c8c8;"></div>
<div class="sk" style="left:460.90px;top:348.20px;width:6.80px;height:6.80px;background:#fff;"></div>
<span class="t" style="left:470.60px;top:348.28px;font-size:6.0px;transform:scaleX(0.9403);">Rect</span>
<div class="sk" style="left:462.20px;top:360.00px;width:6.40px;height:6.40px;background:#fff;"></div>
<span class="t" style="left:471.50px;top:359.83px;font-size:5.6px;transform:scaleX(0.9875);">tal mesh</span>
<span class="t" style="left:461.30px;top:369.20px;font-size:5.8px;transform:scaleX(0.9544);">Rotate about</span>
<div class="btn" style="left:461.70px;top:378.50px;width:18.10px;height:11.20px;"></div>
<span class="t" style="left:464.90px;top:380.83px;font-size:5.6px;color:#000;transform:scaleX(0.9639);">Axial</span>
<div class="sk" style="left:482.90px;top:378.50px;width:11.50px;height:10.50px;background:#fff;"></div>
<span class="t" style="left:485.70px;top:379.70px;font-size:5.4px;color:#000;-webkit-text-stroke:0;">15</span>
<div class="btn" style="left:461.70px;top:392.70px;width:18.10px;height:11.20px;"></div>
<span class="t" style="left:465.85px;top:395.03px;font-size:5.6px;color:#000;transform:scaleX(0.9838);">Vert</span>
<div class="sk" style="left:482.90px;top:392.70px;width:11.50px;height:10.50px;background:#fff;"></div>
<span class="t" style="left:485.70px;top:393.90px;font-size:5.4px;color:#000;-webkit-text-stroke:0;">15</span>
<div class="btn" style="left:461.70px;top:406.60px;width:18.10px;height:11.20px;"></div>
<span class="t" style="left:464.90px;top:408.93px;font-size:5.6px;color:#000;transform:scaleX(0.8953);">Horiz</span>
<div class="sk" style="left:482.90px;top:406.60px;width:11.50px;height:10.50px;background:#fff;"></div>
<span class="t" style="left:485.70px;top:407.80px;font-size:5.4px;color:#000;-webkit-text-stroke:0;">15</span>
<div class="sk" style="left:461.70px;top:423.80px;width:32.50px;height:9.80px;background:#fff;"></div>
<span class="t" style="left:464.20px;top:426.21px;font-size:5.3px;color:#000;transform:scaleX(1.0081);-webkit-text-stroke:0;">no scale</span>
<div class="cbtn" style="left:485.00px;top:424.60px;width:9.40px;height:8.60px;"><i class="tri" style="left:1.40px;top:2.60px"></i></div>
<span class="t" style="left:461.50px;top:440.48px;font-size:6.0px;transform:scaleX(0.9559);">Res</span>
<div class="sk" style="left:474.70px;top:439.60px;width:19.70px;height:8.40px;background:#fff;"></div>
<span class="t" style="left:476.90px;top:440.65px;font-size:5.4px;color:#000;-webkit-text-stroke:0;">300</span>
<div class="sk" style="left:460.90px;top:454.40px;width:6.80px;height:6.80px;background:#fff;"></div>
<span class="t" style="left:470.60px;top:454.30px;font-size:5.8px;transform:scaleX(1.0211);">Pscript</span>
<span class="t" style="left:499.00px;top:137.88px;font-size:6.0px;transform:scaleX(0.9321);">Color By:</span>
<svg style="position:absolute;left:498px;top:148px" width="412" height="398" viewBox="498 148 412 398"><g fill="none" stroke="#222" stroke-width="0.9"><path d="M614.3 148V468.5"/><path d="M498 468.6H910"/><path d="M498 513.2H910"/><path d="M667.6 350L662.2 513"/><circle cx="585.1" cy="343.5" r="23.7" stroke="#111" stroke-width="1.3"/></g><path d="M642.6 148V406.8" stroke="#666" stroke-width="1.7"/></svg>
<div style="left:1.30px;top:87.00px;width:453.30px;height:465.00px;background:#b9d1ea;border:1px solid #3f4f63;box-sizing:border-box;border-radius:3px 3px 0 0;"></div>
<div style="left:2.30px;top:88.00px;width:451.30px;height:18.20px;background:linear-gradient(#99b6d8,#bdd3eb);border-radius:2px 2px 0 0;"></div>
<svg style="position:absolute;left:6.7px;top:93.5px" width="10.5" height="10" viewBox="0 0 10.5 10"><path d="M0.5 0.5H9.3V6.2L6.6 8.8H0.5Z" fill="#fff" stroke="#606060" stroke-width="0.9"/><rect x="1.2" y="1.1" width="7.3" height="3" fill="#ff2a2a"/><path d="M1.8 2.7H8.2" stroke="#fff" stroke-width="0.6" stroke-dasharray="1.1 1.3"/><path d="M0.7 8.7H4" stroke="#111" stroke-width="0.9" stroke-dasharray="1.1 0.6"/><path d="M5.8 7L7.8 5.6" stroke="#222" stroke-width="1"/><circle cx="8.4" cy="7.4" r="0.55" fill="#1f9f9f"/></svg>
<div style="left:390.70px;top:93.00px;width:18.10px;height:10.40px;background:linear-gradient(#cddef1 0%,#c2d6ec 48%,#a9c3e2 52%,#b4cce8 100%);border:1px solid #74879f;box-sizing:border-box;border-radius:1.5px;"><i style="position:absolute;left:5.4px;top:5.2px;width:6.2px;height:2.2px;background:#fff;border:0.6px solid #6f7f92;box-sizing:border-box"></i></div>
<div style="left:410.60px;top:93.00px;width:17.80px;height:10.40px;background:linear-gradient(#cddef1 0%,#c2d6ec 48%,#a9c3e2 52%,#b4cce8 100%);border:1px solid #74879f;box-sizing:border-box;border-radius:1.5px;"><i style="position:absolute;left:5.6px;top:2.2px;width:5.4px;height:4.2px;border:0.7px solid #6a788a;border-top-width:1.3px;box-sizing:border-box;background:#f4f8ff"></i></div>
<div style="left:430.20px;top:93.00px;width:18.30px;height:10.40px;background:linear-gradient(#e09a8e 0%,#d4705f 48%,#bf3f2c 52%,#cc5a45 100%);border:1px solid #6b3a38;box-sizing:border-box;border-radius:1.5px;"><svg style="position:absolute;left:5.2px;top:1.6px" width="7" height="6" viewBox="0 0 7 6"><path d="M1 0.6L6 5.2M6 0.6L1 5.2" stroke="#fff" stroke-width="1.5"/></svg></div>
<div style="left:7.70px;top:106.20px;width:441.50px;height:440.40px;background:#f0f0f0;"></div>
<div style="left:44.40px;top:147.00px;width:404.80px;height:399.60px;background:#fff;"></div>
<div style="left:44.40px;top:146.00px;width:404.80px;height:1.60px;background:#707070;"></div>
<div style="left:43.20px;top:107.00px;width:1.00px;height:439.00px;background:#8e8e8e;"></div>
<div style="left:44.40px;top:107.00px;width:0.80px;height:39.00px;background:#fff;"></div>
<div style="left:8.00px;top:544.80px;width:36.00px;height:1.00px;background:#6e6e6e;"></div>
<div class="btn dflt" style="left:8.10px;top:107.30px;width:33.90px;height:11.50px;"></div>
<span class="t" style="left:16.15px;top:109.53px;font-size:6.0px;color:#000;transform:scaleX(0.9200);">Update</span>
<div class="btn" style="left:8.60px;top:121.20px;width:14.40px;height:10.80px;"></div>
<span class="t" style="left:10.51px;top:123.33px;font-size:5.6px;color:#000;">Last</span>
<div class="btn" style="left:26.00px;top:121.20px;width:14.20px;height:10.80px;"></div>
<span class="t" style="left:27.34px;top:123.33px;font-size:5.6px;color:#9a9a9a;">Next</span>
<div class="btn" style="left:8.60px;top:136.40px;width:32.40px;height:10.60px;"></div>
<span class="t" style="left:16.96px;top:138.18px;font-size:6.0px;color:#000;">Reset</span>
<div class="sk" style="left:8.20px;top:151.00px;width:6.80px;height:6.80px;background:#fff;"></div>
<span class="t" style="left:17.90px;top:150.68px;font-size:6.0px;transform:scaleX(0.9193);">Zoom</span>
<div class="sk" style="left:8.20px;top:163.80px;width:6.80px;height:6.80px;background:#fff;"></div>
<span class="t" style="left:17.90px;top:163.58px;font-size:6.0px;transform:scaleX(1.0371);">Origin</span>
<div style="left:8.40px;top:179.70px;width:4.60px;height:4.20px;background:#e2e2e2;"></div>
<div style="left:8.20px;top:183.90px;width:6.00px;height:0.80px;background:#8a8a8a;"></div>
<div class="sk" style="left:13.90px;top:176.70px;width:27.80px;height:8.60px;background:#fff;"></div>
<span class="t" style="left:16.50px;top:178.33px;font-size:5.6px;color:#000;-webkit-text-stroke:0;">0</span>
<div style="left:8.40px;top:194.90px;width:4.60px;height:4.20px;background:#e2e2e2;"></div>
<div style="left:8.20px;top:199.10px;width:6.00px;height:0.80px;background:#8a8a8a;"></div>
<div class="sk" style="left:13.90px;top:192.00px;width:27.80px;height:8.50px;background:#fff;"></div>
<span class="t" style="left:16.50px;top:193.58px;font-size:5.6px;color:#000;-webkit-text-stroke:0;">0</span>
<div style="left:8.40px;top:209.20px;width:4.60px;height:4.20px;background:#e2e2e2;"></div>
<div style="left:8.20px;top:213.40px;width:6.00px;height:0.80px;background:#8a8a8a;"></div>
<div class="sk" style="left:13.90px;top:206.10px;width:27.80px;height:8.70px;background:#fff;"></div>
<span class="t" style="left:16.50px;top:207.78px;font-size:5.6px;color:#000;-webkit-text-stroke:0;">0</span>
<span class="t" style="left:8.20px;top:216.88px;font-size:6.0px;transform:scaleX(0.9289);">Extent</span>
<div style="left:8.40px;top:229.20px;width:4.60px;height:4.20px;background:#e2e2e2;"></div>
<div style="left:8.20px;top:233.40px;width:6.00px;height:0.80px;background:#8a8a8a;"></div>
<div class="sk" style="left:13.90px;top:226.20px;width:27.80px;height:8.60px;background:#fff;"></div>
<span class="t" style="left:16.50px;top:227.83px;font-size:5.6px;color:#000;-webkit-text-stroke:0;">100.0000</span>
<div style="left:8.40px;top:244.30px;width:4.60px;height:4.20px;background:#e2e2e2;"></div>
<div style="left:8.20px;top:248.50px;width:6.00px;height:0.80px;background:#8a8a8a;"></div>
<div class="sk" style="left:13.90px;top:241.50px;width:27.80px;height:8.40px;background:#fff;"></div>
<span class="t" style="left:16.50px;top:243.03px;font-size:5.6px;color:#000;-webkit-text-stroke:0;">100.0000</span>
<div class="sk" style="left:8.20px;top:255.30px;width:6.80px;height:6.80px;background:#fff;"><svg width="7" height="7" viewBox="0 0 7 7" style="position:absolute;left:-0.5px;top:-0.5px"><path d="M1.4 3.1 L2.8 4.6 L5.4 1.5" stroke="#000" stroke-width="1.05" fill="none"/></svg></div>
<span class="t" style="left:17.90px;top:255.08px;font-size:6.0px;transform:scaleX(0.9567);">Refresh</span>
<div class="sk" style="left:8.20px;top:266.30px;width:6.80px;height:6.80px;background:#fff;"></div>
<span class="t" style="left:17.90px;top:265.98px;font-size:6.0px;transform:scaleX(0.9451);">Surf</span>
<div class="sk" style="left:31.00px;top:265.00px;width:10.70px;height:8.90px;background:#fff;"></div>
<span class="t" style="left:33.40px;top:266.72px;font-size:5.7px;color:#000;-webkit-text-stroke:0;">16</span>
<div class="sk" style="left:8.20px;top:277.40px;width:6.80px;height:6.80px;background:#fff;"></div>
<span class="t" style="left:17.90px;top:277.08px;font-size:6.0px;transform:scaleX(0.9235);">Unused</span>
<div class="sk" style="left:8.20px;top:289.00px;width:6.80px;height:6.80px;background:#fff;"></div>
<span class="t" style="left:17.90px;top:288.68px;font-size:6.0px;transform:scaleX(0.9094);">Cell</span>
<div class="sk" style="left:30.60px;top:287.90px;width:11.10px;height:9.00px;background:#fff;"></div>
<span class="t" style="left:33.20px;top:289.67px;font-size:5.7px;color:#000;-webkit-text-stroke:0;">18</span>
<div class="sk" style="left:8.20px;top:300.90px;width:6.80px;height:6.80px;background:#fff;"></div>
<span class="t" style="left:17.90px;top:300.58px;font-size:6.0px;transform:scaleX(0.9136);">Color</span>
<div class="sk" style="left:8.20px;top:312.10px;width:6.80px;height:6.80px;background:#fff;"><svg width="7" height="7" viewBox="0 0 7 7" style="position:absolute;left:-0.5px;top:-0.5px"><path d="M1.4 3.1 L2.8 4.6 L5.4 1.5" stroke="#000" stroke-width="1.05" fill="none"/></svg></div>
<span class="t" style="left:17.90px;top:311.68px;font-size:6.0px;transform:scaleX(0.9497);">Facets</span>
<div style="left:8.20px;top:324.70px;width:33.50px;height:20.50px;border:1px solid #b4b4b4;box-sizing:border-box;box-shadow:inset 0 -1px 0 #fafafa;"></div>
<div style="left:12.40px;top:321.00px;width:26.00px;height:6.00px;background:#f0f0f0;"></div>
<span class="t" style="left:13.20px;top:320.73px;font-size:5.6px;transform:scaleX(0.9488);">WW Mesh</span>
<div class="sk" style="left:8.80px;top:330.00px;width:32.50px;height:9.60px;background:#fff;"></div>
<span class="t" style="left:11.30px;top:331.51px;font-size:5.3px;color:#000;transform:scaleX(0.9989);-webkit-text-stroke:0;">Cell Line</span>
<div class="cbtn" style="left:32.10px;top:330.80px;width:9.40px;height:8.40px;"><i class="tri" style="left:1.40px;top:2.50px"></i></div>
<div style="left:9.20px;top:340.60px;width:31.50px;height:0.70px;background:#c8c8c8;"></div>
<div class="sk" style="left:8.20px;top:348.20px;width:6.80px;height:6.80px;background:#fff;"></div>
<span class="t" style="left:17.90px;top:348.28px;font-size:6.0px;transform:scaleX(0.9403);">Rect</span>
<div class="sk" style="left:9.50px;top:360.00px;width:6.40px;height:6.40px;background:#fff;"></div>
<span class="t" style="left:18.80px;top:359.83px;font-size:5.6px;transform:scaleX(0.9875);">tal mesh</span>
<span class="t" style="left:8.60px;top:369.20px;font-size:5.8px;transform:scaleX(0.9544);">Rotate about</span>
<div class="btn" style="left:9.00px;top:378.50px;width:18.10px;height:11.20px;"></div>
<span class="t" style="left:12.20px;top:380.83px;font-size:5.6px;color:#000;transform:scaleX(0.9639);">Axial</span>
<div class="sk" style="left:30.20px;top:378.50px;width:11.50px;height:10.50px;background:#fff;"></div>
<span class="t" style="left:33.00px;top:379.70px;font-size:5.4px;color:#000;-webkit-text-stroke:0;">15</span>
<div class="btn" style="left:9.00px;top:392.70px;width:18.10px;height:11.20px;"></div>
<span class="t" style="left:13.15px;top:395.03px;font-size:5.6px;color:#000;transform:scaleX(0.9838);">Vert</span>
<div class="sk" style="left:30.20px;top:392.70px;width:11.50px;height:10.50px;background:#fff;"></div>
<span class="t" style="left:33.00px;top:393.90px;font-size:5.4px;color:#000;-webkit-text-stroke:0;">15</span>
<div class="btn" style="left:9.00px;top:406.60px;width:18.10px;height:11.20px;"></div>
<span class="t" style="left:12.20px;top:408.93px;font-size:5.6px;color:#000;transform:scaleX(0.8953);">Horiz</span>
<div class="sk" style="left:30.20px;top:406.60px;width:11.50px;height:10.50px;background:#fff;"></div>
<span class="t" style="left:33.00px;top:407.80px;font-size:5.4px;color:#000;-webkit-text-stroke:0;">15</span>
<div class="sk" style="left:9.00px;top:423.80px;width:32.50px;height:9.80px;background:#fff;"></div>
<span class="t" style="left:11.50px;top:426.21px;font-size:5.3px;color:#000;transform:scaleX(1.0081);-webkit-text-stroke:0;">no scale</span>
<div class="cbtn" style="left:32.30px;top:424.60px;width:9.40px;height:8.60px;"><i class="tri" style="left:1.40px;top:2.60px"></i></div>
<span class="t" style="left:8.80px;top:440.48px;font-size:6.0px;transform:scaleX(0.9559);">Res</span>
<div class="sk" style="left:22.00px;top:439.60px;width:19.70px;height:8.40px;background:#fff;"></div>
<span class="t" style="left:24.20px;top:440.65px;font-size:5.4px;color:#000;-webkit-text-stroke:0;">300</span>
<div class="sk" style="left:8.20px;top:454.40px;width:6.80px;height:6.80px;background:#fff;"></div>
<span class="t" style="left:17.90px;top:454.30px;font-size:5.8px;transform:scaleX(1.0211);">Pscript</span>
<div class="sk" style="left:51.30px;top:107.60px;width:33.30px;height:10.20px;background:#fff;"></div>
<span class="t" style="left:53.80px;top:109.17px;font-size:5.7px;color:#000;transform:scaleX(0.8922);-webkit-text-stroke:0;">Global</span>
<div class="cbtn" style="left:75.00px;top:108.40px;width:9.80px;height:9.00px;"><i class="tri" style="left:1.60px;top:2.80px"></i></div>
<div class="sk" style="left:92.00px;top:107.60px;width:27.80px;height:9.60px;background:#fff;"></div>
<span class="t" style="left:95.00px;top:109.13px;font-size:5.6px;color:#000;-webkit-text-stroke:0;">2.3022</span>
<div class="sk" style="left:125.20px;top:107.60px;width:27.80px;height:9.60px;background:#fff;"></div>
<span class="t" style="left:128.20px;top:109.13px;font-size:5.6px;color:#000;-webkit-text-stroke:0;">0</span>
<div class="sk" style="left:158.80px;top:107.60px;width:28.20px;height:9.60px;background:#fff;"></div>
<span class="t" style="left:161.80px;top:109.13px;font-size:5.6px;color:#000;-webkit-text-stroke:0;">-11.9708</span>
<div class="sk" style="left:209.00px;top:107.60px;width:22.40px;height:10.20px;background:#fff;"></div>
<span class="t" style="left:211.50px;top:109.17px;font-size:5.7px;color:#000;transform:scaleX(0.8649);-webkit-text-stroke:0;">XZ</span>
<div class="cbtn" style="left:221.80px;top:108.40px;width:9.80px;height:9.00px;"><i class="tri" style="left:1.60px;top:2.80px"></i></div>
<div class="sk" style="left:235.00px;top:107.60px;width:28.00px;height:9.20px;background:#fff;"></div>
<span class="t" style="left:238.00px;top:108.93px;font-size:5.6px;color:#000;-webkit-text-stroke:0;">1.0000</span>
<div class="sk" style="left:266.40px;top:107.60px;width:27.60px;height:9.20px;background:#fff;"></div>
<span class="t" style="left:269.40px;top:108.93px;font-size:5.6px;color:#000;-webkit-text-stroke:0;">0</span>
<div class="sk" style="left:297.60px;top:107.60px;width:28.00px;height:9.20px;background:#fff;"></div>
<span class="t" style="left:300.60px;top:108.93px;font-size:5.6px;color:#000;-webkit-text-stroke:0;">0</span>
<span class="t" style="left:51.00px;top:125.18px;font-size:6.0px;transform:scaleX(0.8564);">Label:</span>
<div class="sk" style="left:71.30px;top:121.40px;width:32.10px;height:10.60px;background:#fff;"></div>
<span class="t" style="left:73.80px;top:123.17px;font-size:5.7px;color:#000;transform:scaleX(0.8297);-webkit-text-stroke:0;">CEL</span>
<div class="cbtn" style="left:93.80px;top:122.20px;width:9.80px;height:9.40px;"><i class="tri" style="left:1.60px;top:3.00px"></i></div>
<span class="t" style="left:180.00px;top:125.18px;font-size:6.0px;transform:scaleX(0.9369);">Level:</span>
<div class="sk" style="left:196.20px;top:121.80px;width:22.80px;height:10.60px;background:#fff;"></div>
<span class="t" style="left:198.70px;top:123.57px;font-size:5.7px;color:#000;transform:scaleX(0.8201);-webkit-text-stroke:0;">10</span>
<div class="cbtn" style="left:209.40px;top:122.60px;width:9.80px;height:9.40px;"><i class="tri" style="left:1.60px;top:3.00px"></i></div>
<div class="sk" style="left:222.20px;top:124.60px;width:7.00px;height:7.00px;background:#fff;"></div>
<div class="sk" style="left:235.00px;top:120.80px;width:28.00px;height:9.50px;background:#fff;"></div>
<span class="t" style="left:238.00px;top:122.28px;font-size:5.6px;color:#000;-webkit-text-stroke:0;">0</span>
<div class="sk" style="left:266.40px;top:120.80px;width:27.60px;height:9.50px;background:#fff;"></div>
<span class="t" style="left:269.40px;top:122.28px;font-size:5.6px;color:#000;-webkit-text-stroke:0;">0</span>
<div class="sk" style="left:297.60px;top:120.80px;width:28.00px;height:9.50px;background:#fff;"></div>
<span class="t" style="left:300.60px;top:122.28px;font-size:5.6px;color:#000;-webkit-text-stroke:0;">1.0000</span>
<span class="t" style="left:46.20px;top:138.28px;font-size:6.0px;transform:scaleX(0.9240);">Color By:</span>
<div class="sk" style="left:71.30px;top:135.00px;width:32.10px;height:10.60px;background:#fff;"></div>
<span class="t" style="left:73.80px;top:136.77px;font-size:5.7px;color:#000;transform:scaleX(0.8097);-webkit-text-stroke:0;">MAT</span>
<div class="cbtn" style="left:93.80px;top:135.80px;width:9.80px;height:9.40px;"><i class="tri" style="left:1.60px;top:3.00px"></i></div>
<span class="t" style="left:147.00px;top:136.58px;font-size:6.0px;transform:scaleX(0.9075);">Zoom out</span>
<div style="left:173.00px;top:139.60px;width:125.00px;height:0.90px;background:#8c8c8c;"></div>
<div style="left:173.00px;top:140.50px;width:125.00px;height:0.80px;background:#fff;"></div>
<div style="left:236.60px;top:137.60px;width:0.90px;height:4.60px;background:#444;"></div>
<div style="left:235.20px;top:141.40px;width:2.00px;height:0.80px;background:#444;"></div>
<span class="t" style="left:302.80px;top:136.58px;font-size:6.0px;transform:scaleX(0.9089);">Zoom in</span>
<svg style="position:absolute;left:45px;top:147.5px" width="403.4" height="399" viewBox="45 147.5 403.4 399"><g fill="none" stroke="#1c1c1c" stroke-width="0.9"><path d="M45 441.3H448.4"/><path d="M393.4 147.5V546.4"/><path d="M162.4 441.3V234.4H331.8V441.3"/><path d="M111 406.8V287.4H152.6V406.8" stroke-width="0.9"/><path d="M111 406.8H152.6" stroke="#888"/></g><g fill="none" stroke="#101010" stroke-width="1.25"><circle cx="247.1" cy="347.2" r="56.2" stroke-width="1.1"/><circle cx="247.1" cy="347.3" r="31.6"/><circle cx="246.9" cy="347" r="23.9" stroke-width="1.35"/></g><path fill="none" stroke="#00ff00" stroke-width="0.5" stroke-linejoin="round" d="M131.2 346.0L329.6 342.4L331.4 340.5L331.2 338.1L330.1 337.2L327.2 335.2L325.4 335.4L321.5 334.9M131.2 346.0L337.1 349.7L338.3 348.8L340.3 345.9L340.4 343.1L341.0 341.0L341.5 339.7M131.2 346.0L330.2 334.9L332.0 334.4L334.1 331.8L334.0 329.7L333.9 327.6L333.4 324.7M131.2 346.0L335.1 335.1L337.0 333.1L340.3 332.0L342.2 330.8L345.0 328.9L345.3 327.5L344.7 324.4L342.0 322.6M131.2 346.0L305.7 342.5L309.3 341.4L311.8 339.9L313.3 338.9L315.2 336.2L316.8 332.8L317.5 331.3L318.0 329.4M131.2 346.0L333.9 337.0L335.0 338.1L336.9 338.5L339.3 337.7L341.2 337.5L342.5 335.5M131.2 346.0L336.2 343.6M131.2 346.0L353.5 352.5L355.8 352.1L357.7 349.8L357.6 348.4L356.6 347.1L355.6 346.2L354.0 346.6M131.2 346.0L332.8 336.0L334.7 335.0L335.8 333.9L339.8 333.5L342.3 333.0L343.2 331.9L343.9 330.0L345.2 329.1M131.2 346.0L342.0 333.2M131.2 346.0L337.8 355.0L339.4 356.6L342.0 357.3L344.9 358.2L347.9 359.8M131.2 346.0L344.0 355.3L347.3 355.4L349.3 358.1L350.5 359.4L351.6 361.3L351.4 364.5L352.4 368.3M131.2 346.0L328.6 335.6L330.7 337.0L333.0 339.5L336.1 339.8L338.4 342.3L339.1 344.7L341.7 346.9M131.2 346.0L340.0 342.5L341.5 343.1L343.1 342.7M131.2 346.0L339.7 359.5L342.0 358.0L342.5 354.6L343.3 353.4L344.7 352.5M131.2 346.0L329.7 361.1L331.5 362.2L334.4 364.3L337.6 363.8M131.2 346.0L346.1 359.7M131.2 346.0L335.7 347.5L337.9 344.8L338.1 342.3L339.4 339.9L339.9 337.3L340.9 334.0L339.8 331.5M131.2 346.0L331.5 340.2L334.4 339.9L337.1 339.5M131.2 346.0L334.3 353.0L336.9 355.6L339.3 356.3L341.6 356.5L344.6 355.8M131.2 346.0L338.6 345.3L340.8 345.9L342.4 345.6L345.5 344.8L347.6 341.7L347.6 338.7L346.0 335.9L346.9 333.7M131.2 346.0L332.9 345.2L335.0 346.0L336.9 346.7L337.4 348.2L336.7 349.9L335.4 350.5M131.2 346.0L351.2 340.4L352.9 341.4L356.6 341.1L359.8 341.2L360.9 340.4L363.1 339.5L364.7 336.1L366.9 333.4M131.2 346.0L340.6 335.1L344.3 334.3L345.6 334.4L349.2 335.8L349.8 337.7L352.8 340.0L354.4 342.1M131.2 346.0L341.5 338.7L342.3 337.7L344.9 334.8L346.1 333.4L348.0 330.9M131.2 346.0L337.6 351.8L339.0 353.5L339.2 356.7L338.8 359.0M131.2 346.0L261.6 344.1M131.2 346.0L328.1 345.4L331.2 346.0L332.6 345.0L333.1 343.9L333.7 341.9M131.2 346.0L331.8 361.2L333.2 360.9L335.7 359.2M131.2 346.0L339.5 340.0L341.5 339.6L343.0 339.6M131.2 346.0L353.5 362.0M131.2 346.0L330.0 344.3L332.4 341.7L335.3 341.3L338.6 342.3M131.2 346.0L352.7 336.2L356.4 336.6L359.2 337.9L360.5 337.9L362.2 336.4L362.7 332.9L363.4 330.1L364.9 327.3M131.2 346.0L327.3 347.1M131.2 346.0L345.4 335.1L348.3 333.4L349.9 330.8L351.5 327.7L350.5 324.1M131.2 346.0L327.9 341.4L330.9 342.2L332.3 342.9L334.7 344.0L335.1 345.4M131.2 346.0L334.9 339.3L336.7 341.3L338.0 342.0M131.2 346.0L331.8 346.6M131.2 346.0L341.9 344.1L343.9 343.2L346.7 342.4L347.9 341.5L349.6 339.5L351.8 339.0L354.4 336.1M131.2 346.0L333.6 352.6L335.7 350.1L337.2 349.7L340.0 351.3L340.7 353.2M131.2 346.0L333.5 343.7M131.2 346.0L273.5 352.2L275.3 351.4L276.9 350.7L280.1 348.5M131.2 346.0L339.8 358.9L342.7 356.4L344.6 354.2L344.9 350.6L345.0 346.8L345.3 345.2L345.2 343.2L343.8 340.3M131.2 346.0L270.2 350.0L271.6 350.4L274.9 351.4L277.2 352.3M131.2 346.0L339.3 342.5L341.4 342.7L344.8 342.2L345.8 341.4L348.1 341.3M131.2 346.0L330.4 354.4L332.5 352.8L335.8 351.4L337.0 349.9L337.5 347.6M131.2 346.0L342.5 345.9L345.9 347.2L348.6 348.1L350.5 346.9L354.0 347.6L356.6 350.5M131.2 346.0L263.5 342.2L266.9 343.4L267.6 344.6L267.6 345.8L269.4 347.9L272.6 348.1L274.5 350.3L276.0 352.2M131.2 346.0L328.6 354.8L329.6 355.4L332.8 357.8L334.9 358.3M131.2 346.0L330.8 357.0M131.2 346.0L252.9 350.4L255.7 349.2L257.4 349.8M131.2 346.0L332.3 334.1L334.7 335.0L338.6 334.4L341.6 332.7L342.6 331.2M131.2 346.0L331.7 354.8M131.2 346.0L341.8 347.0L342.8 348.2L344.2 348.3M131.2 346.0L341.6 344.3M131.2 346.0L330.1 342.6L332.3 342.0L333.8 341.2L334.0 339.2L333.5 335.4L330.7 332.7L328.6 332.2L326.2 329.6M131.2 346.0L328.0 345.5L330.3 346.5L331.8 347.7L333.3 349.5L335.2 351.0M131.2 346.0L327.9 355.9L331.7 354.9L333.3 352.0L336.1 349.5L337.6 346.7M131.2 346.0L337.5 350.2L339.8 351.2L341.9 353.9L341.6 357.4L343.0 359.6L346.8 360.0M131.2 346.0L340.9 341.6L343.4 343.0L345.4 344.1L347.7 343.8L350.3 344.3M131.2 346.0L329.8 348.6L331.8 347.5L335.5 348.9M131.2 346.0L329.2 338.2L332.3 339.6L334.2 339.7L336.0 339.0L337.7 337.3L338.1 335.5L337.4 331.8L336.5 330.8M131.2 346.0L331.1 340.3L332.9 338.6L336.4 338.0M131.2 346.0L327.4 358.9L328.7 358.3L330.2 357.5L333.4 356.6L334.6 356.6L337.7 357.5L339.0 357.5M131.2 346.0L331.2 342.9L334.1 344.7L336.2 345.5L337.4 346.3M131.2 346.0L344.0 333.3L346.1 331.6L348.2 330.7L350.9 327.8L353.0 326.6L353.8 323.5L355.7 322.1M131.2 346.0L339.1 333.2L340.9 334.8L342.4 335.0L344.7 333.4M131.2 346.0L339.6 343.5L341.7 341.4L343.1 339.3L343.0 337.3L343.0 333.5L341.3 331.5M131.2 346.0L342.4 356.6M131.2 346.0L325.3 346.9L328.8 347.8L331.4 349.1L333.9 349.0M131.2 346.0L327.8 349.2L330.1 351.9L333.6 353.0L335.5 355.4M131.2 346.0L345.2 352.6L347.2 353.2L349.4 352.9L351.9 351.9L352.5 350.9M131.2 346.0L347.9 362.5L349.8 363.9L352.0 363.6L355.2 362.3M131.2 346.0L254.4 346.9L255.8 347.0L258.1 347.1L259.1 348.2L259.4 352.2L258.3 355.5L259.1 359.4L260.0 363.1M131.2 346.0L329.4 359.1M131.2 346.0L348.4 350.9L352.2 351.0L353.9 350.1L355.7 349.1L356.2 347.5M131.2 346.0L342.0 337.3L344.0 335.5L345.9 334.5L348.7 335.0L352.1 336.2M131.2 346.0L343.8 335.5L345.7 337.6L348.5 339.5L350.0 340.2L350.8 341.3L351.0 343.2M131.2 346.0L342.9 351.7L344.0 350.5L346.0 349.1L349.1 347.1L349.7 345.4L350.4 344.3L349.7 342.2L347.9 341.0M131.2 346.0L336.4 339.4M131.2 346.0L327.3 337.9L329.6 335.9L331.2 332.8L332.5 332.5L336.0 333.7L338.5 335.0L340.6 336.7L341.9 337.7M131.2 346.0L327.8 333.4L329.4 331.2L331.0 331.0M131.2 346.0L348.9 338.2L350.8 337.5L352.2 334.0L354.6 332.0L354.6 328.5L355.7 326.2L357.6 324.6M131.2 346.0L328.8 339.7M131.2 346.0L271.9 355.5L275.4 357.0L276.0 358.9L274.4 362.2L275.2 364.7L278.1 367.1M131.2 346.0L330.1 357.1M131.2 346.0L323.8 342.7M131.2 346.0L335.5 357.3M131.2 346.0L338.8 345.6L341.5 343.0L341.7 341.8L339.8 338.5L338.6 337.4L337.3 337.5L334.4 336.8M131.2 346.0L338.9 353.3L339.9 354.2L340.5 357.9L339.6 359.1L339.5 360.6L341.9 363.3L342.4 366.2M131.2 346.0L337.0 357.0L338.9 356.0L339.9 355.3L340.9 353.5L342.6 352.2L344.8 348.9L346.8 345.9L347.7 345.0M131.2 346.0L313.0 345.0L316.2 343.2L317.3 339.9L317.0 338.8L314.5 336.5L314.6 335.3L314.7 332.7M131.2 346.0L335.1 348.8L336.8 348.2L339.4 348.1L341.6 346.2M131.2 346.0L349.9 336.0L352.1 335.3L355.4 333.5L356.6 330.0L355.7 328.5M131.2 346.0L335.2 343.3M131.2 346.0L328.0 367.7L330.6 368.4L332.1 370.4L333.2 372.2L335.0 374.7M131.2 346.0L332.5 345.5L335.7 347.1L338.2 349.0L338.4 352.3L338.1 354.4M131.2 346.0L327.4 356.7M131.2 346.0L330.0 357.2L331.4 356.7L333.3 357.4L334.4 359.6L338.0 360.4L339.8 360.5M131.2 346.0L342.0 366.0L343.3 364.6L346.4 364.1L349.4 364.1L351.9 365.9L354.2 368.7M131.2 346.0L339.4 306.0L342.9 306.7L345.6 308.4L347.6 309.4L348.9 310.6L351.8 312.5L353.4 315.1L355.7 316.3L358.5 317.5L361.6 318.2M131.2 346.0L343.7 320.4L345.5 321.8L348.9 320.7L350.4 321.6L352.5 321.6L356.0 323.3M131.2 346.0L364.0 384.8L365.7 385.1L368.4 386.1L370.4 388.1L372.1 391.2L373.2 393.5M131.2 346.0L364.6 392.6L367.6 391.4L370.4 389.5L371.2 385.6L371.1 384.0L369.9 381.8L367.3 381.6L364.1 381.9M131.2 346.0L358.1 323.2L359.8 323.3L362.2 322.5L365.5 324.7L365.5 328.6L365.7 330.5L364.5 331.7M131.2 346.0L146.3 297.9L146.1 295.9L147.7 294.3L148.6 293.3L149.3 292.6M131.2 346.0L150.1 313.5L152.3 312.3L154.0 312.2L155.5 313.9L157.2 314.7L158.9 314.6L159.8 314.9L160.0 315.9L161.0 317.0M131.2 346.0L151.7 358.2L152.9 359.0L154.2 360.5L155.1 360.5L156.7 359.6M131.2 346.0L109.7 334.4L108.6 334.4L107.8 332.3L105.5 331.7L103.6 330.5L102.4 328.4L103.0 326.2L101.9 324.5L100.9 322.6L99.4 320.7M131.2 346.0L114.1 339.8L112.3 339.3L110.0 338.8L109.1 337.9L107.2 338.2M131.2 346.0L126.6 298.6L127.4 296.4L127.4 294.9L128.3 294.6L130.3 294.8L131.0 293.1L132.9 291.5L133.9 289.1L134.6 287.6L135.5 287.6M131.2 346.0L119.5 288.5M131.2 346.0L112.5 366.9L112.3 368.3L112.8 369.1L114.1 369.6L115.4 370.2L115.0 372.5M131.2 346.0L114.5 370.6L114.4 371.9L113.8 373.8L113.0 374.1L110.7 373.7L109.8 373.5M131.2 346.0L116.2 391.7L114.0 392.8L112.1 393.0M131.2 346.0L110.8 325.2L108.8 325.2L106.7 325.5L106.3 326.5M131.2 346.0L141.1 282.2L142.6 281.2L143.0 279.9L143.0 278.5L142.8 276.6M131.2 346.0L115.8 339.0L113.8 337.6L113.1 337.2L111.2 336.9L110.8 334.3L110.4 332.8L108.5 332.4L107.6 333.0L107.9 333.8M131.2 346.0L115.1 309.7L114.3 309.6L113.4 308.7L113.2 307.6M131.2 346.0L140.2 286.6L139.5 284.9L138.6 283.1L140.1 281.2M131.2 346.0L152.7 326.7L153.3 324.6L152.0 322.7L151.4 322.0L149.8 321.1L147.9 320.4L146.1 321.7L145.1 323.4L143.8 324.3M131.2 346.0L110.2 364.4M131.2 346.0L143.6 289.8L145.6 289.1L145.5 288.0L146.9 286.8L147.9 287.5L149.3 287.9L150.0 288.9L151.2 290.5M131.2 346.0L114.0 381.6L114.2 382.6L112.1 384.1M131.2 346.0L155.0 377.5L155.8 377.9L157.6 379.3L159.7 378.8L160.4 379.9L160.9 381.8L161.3 382.9L163.1 384.0L163.5 385.6L165.7 386.0M131.2 346.0L138.1 297.0M131.2 346.0L151.4 328.2L151.4 327.1L149.7 325.8L148.0 325.3L146.2 325.3L145.8 326.1M131.2 346.0L115.3 362.1L115.6 364.0L116.6 365.4L117.4 365.1M131.2 346.0L151.1 323.7L152.3 324.2L153.5 323.1L155.1 322.1L155.2 319.8L154.1 317.4L153.5 316.8M131.2 346.0L110.8 367.8L108.9 367.5L108.5 365.4L107.1 365.1M131.2 346.0L136.2 393.6L136.5 394.7L134.3 396.0L134.0 396.8L134.6 398.1M131.2 346.0L154.4 329.7L154.9 328.1L156.7 326.8M131.2 346.0L115.3 347.7L114.4 345.8L112.8 344.8M131.2 346.0L133.5 299.8L133.1 298.3L132.0 296.3L133.6 294.5M131.2 346.0L109.2 350.5L108.6 349.5L110.0 347.6L111.0 347.8L112.0 347.8M131.2 346.0L152.2 313.9L153.2 312.2L152.6 311.1L150.6 311.5L149.5 311.5L148.8 310.4M131.2 346.0L114.9 356.1L114.3 357.0L113.6 358.2L112.6 358.1L112.5 357.2L114.1 356.1L114.4 354.5M131.2 346.0L119.7 395.6M131.2 346.0L148.0 337.4L147.7 335.4L146.0 333.4L144.1 334.5L143.5 335.4M131.2 346.0L151.4 310.4M131.2 346.0L140.2 390.5L141.0 391.0L142.5 389.9L143.6 389.1L143.8 387.2M131.2 346.0L114.5 284.5L114.9 282.8L117.2 282.0L118.6 281.5M131.2 346.0L119.1 406.0L117.5 406.3L116.6 405.4L114.3 405.5L113.3 406.0L112.0 407.3L113.0 408.8L114.2 410.0L116.2 409.5M131.2 346.0L154.1 294.4L155.5 292.5L155.6 291.5L156.6 290.3L155.3 288.5L154.0 288.6L153.4 290.4L154.2 291.5L155.3 293.8M131.2 346.0L153.1 335.1L155.0 334.3L155.1 331.9L155.7 331.2L155.1 329.7L154.6 328.4L153.0 328.2L151.9 329.7L150.8 329.6L148.8 328.9M131.2 346.0L153.8 383.8L154.3 385.6L156.8 385.7L157.3 384.3L157.4 382.0L158.8 380.1L160.7 378.4L161.2 376.9L161.8 375.7M131.2 346.0L152.6 374.2L152.8 375.0L153.9 375.4L155.0 375.1L156.2 375.4L157.7 375.5L157.9 377.1L160.4 377.5L160.5 378.4M131.2 346.0L152.2 322.4M131.2 346.0L111.4 326.5L110.8 325.4L110.2 324.0M131.2 346.0L118.6 398.5L120.1 399.6L119.6 401.1L118.9 403.4L117.1 403.6L115.5 405.0L114.2 405.0M131.2 346.0L110.9 352.0L110.0 353.9L109.4 355.6L108.4 356.9L108.2 358.1L109.3 359.5L110.8 360.5L111.8 359.5L113.0 359.8M131.2 346.0L112.4 339.0L110.2 339.5L109.9 340.3L108.3 340.5L108.0 342.0L107.9 344.1M131.2 346.0L149.0 360.6M131.2 346.0L127.8 298.7L128.4 296.4L130.0 295.7L132.1 296.3L133.0 297.6L132.6 299.7M131.2 346.0L148.3 335.9M131.2 346.0L136.8 289.3M131.2 346.0L112.9 337.1L111.3 336.9L109.2 336.9L108.0 337.8M131.2 346.0L113.2 339.5L111.8 339.4L109.6 339.2L108.1 339.3L106.6 340.9L105.9 343.4L105.2 344.4L104.9 347.0L102.6 347.9L102.8 349.1M131.2 346.0L149.6 331.9L151.8 330.5L153.4 329.7L154.9 329.7L156.6 329.0L158.4 327.3L160.0 326.7M131.2 346.0L150.2 359.6L149.9 362.1L149.8 363.7L148.7 366.1L148.8 367.8M131.2 346.0L148.6 306.4M131.2 346.0L151.3 307.2L152.6 306.0L153.8 306.2L154.2 307.7L156.1 307.7L156.9 306.1L158.5 304.7L159.3 304.6L159.4 302.5M131.2 346.0L109.2 338.4L107.5 337.3L105.9 337.8L104.6 337.9M131.2 346.0L112.1 320.8M131.2 346.0L113.0 336.8L111.5 335.9L110.8 336.6L109.3 335.9L107.8 335.3M131.2 346.0L150.2 288.0L151.3 287.1L151.3 285.8L149.1 284.8L148.0 283.9M131.2 346.0L113.2 351.9L110.6 352.1L108.8 352.6L108.3 353.3L106.0 352.7L103.7 353.3L102.6 352.6L101.0 350.6L99.5 348.6M131.2 346.0L133.6 400.4L134.3 402.3L136.6 402.1L137.0 401.1L137.0 400.3L138.3 399.5L139.2 398.4M131.2 346.0L149.9 326.4L151.2 324.4L152.1 323.2L152.9 322.0M131.2 346.0L114.0 353.4L113.5 354.3L114.2 356.0L113.5 357.6L112.9 359.7M131.2 346.0L134.4 398.1L135.4 399.4L137.7 399.7L139.8 401.1L139.0 402.8L138.3 405.3M131.2 346.0L113.0 342.0L112.7 341.0L112.2 339.3L110.5 338.0L108.6 337.3M131.2 346.0L113.7 338.1L112.5 336.3L111.4 336.0L111.1 335.1M131.2 346.0L153.6 332.5L153.4 331.2L152.5 330.6L152.1 329.4L150.7 327.4L151.1 325.0M131.2 346.0L148.3 325.7L149.0 323.5L150.8 322.0M131.2 346.0L115.1 292.0L114.1 291.6L114.1 289.5L114.6 288.8M131.2 346.0L148.8 374.6L149.6 376.3L148.2 377.6M131.2 346.0L139.2 402.8M131.2 346.0L111.8 310.6L113.1 308.6L114.7 307.3L116.3 308.5L117.4 307.6L118.8 307.7L119.3 309.2M131.2 346.0L128.7 280.4L127.6 278.2L126.8 277.0L125.6 275.3M131.2 346.0L152.2 312.4L152.8 310.8L153.8 310.8L154.5 311.3L155.1 313.5L156.6 314.5M131.2 346.0L112.0 323.5L110.6 323.6L109.9 325.4M131.2 346.0L152.7 371.1L153.9 371.2L155.5 371.5L155.7 372.9L157.4 374.7L159.1 374.3L161.0 373.0L162.9 371.9L163.1 370.0L163.8 368.5M131.2 346.0L136.1 297.6L133.9 296.6L132.9 296.8L131.0 298.4L131.1 300.0L130.9 301.3M131.2 346.0L115.7 340.1L114.3 341.6L112.7 340.7L111.3 341.6L110.4 342.4L109.8 342.8L108.1 341.8L106.6 339.8L106.3 338.6L105.5 338.0M131.2 346.0L106.1 335.0L103.7 334.9L101.5 334.7L100.7 334.1L100.3 332.9L100.3 331.5M131.2 346.0L112.0 341.7L110.3 341.9L108.5 343.0L108.2 343.8L107.3 345.4M131.2 346.0L108.8 334.3L109.0 332.8L109.2 331.7L108.5 330.1M131.2 346.0L111.0 360.7L111.1 362.5L111.9 364.8L111.0 366.0L111.2 367.4M131.2 346.0L113.0 361.3L111.6 361.2L109.9 362.1L108.6 362.8L107.7 364.0L105.8 364.9L105.0 364.2L103.5 364.0L102.2 363.7L101.4 364.2M131.2 346.0L110.6 351.6L109.2 349.9L110.6 348.0L112.3 346.8L111.8 345.0L111.9 343.7L112.5 341.5L112.8 339.7M131.2 346.0L112.6 351.8L112.6 352.9L112.0 354.2L113.2 355.7L114.7 356.5L116.3 356.9L117.6 357.5L118.5 356.9L120.0 357.6M131.2 346.0L108.0 361.3L106.9 361.4L105.0 360.8L103.7 361.5L101.9 362.1L99.7 361.4M131.2 346.0L103.7 343.2L103.0 344.6L101.3 344.7L99.6 343.7L97.6 344.9L96.6 344.9L95.8 343.7L93.5 343.5L91.5 343.0M131.2 346.0L108.6 359.7L108.0 360.3L109.0 362.0L107.9 363.1M131.2 346.0L117.6 354.7L115.4 355.2L113.2 355.3L112.6 354.4M131.2 346.0L113.0 339.0L112.6 338.3L111.5 337.9L110.0 337.3L108.4 337.3L107.5 336.3L106.3 335.7L105.7 335.1L106.1 334.0L105.9 332.1M131.2 346.0L108.7 365.6L108.9 366.4L110.9 366.9L112.3 366.0L113.0 364.2L113.0 363.1L114.4 362.3M131.2 346.0L105.3 338.4L104.7 339.6L105.5 341.1L104.3 342.8L105.1 343.6L104.8 345.5L105.0 347.0M131.2 346.0L107.2 359.5L106.5 361.7L106.1 363.0L105.5 364.2L106.5 365.7L108.6 366.0L109.6 367.0M131.2 346.0L102.2 347.4L102.0 349.1L102.3 349.9L103.3 352.0L104.3 351.9L105.5 352.3M131.2 346.0L110.5 353.3L109.2 354.5L108.3 355.0L106.0 354.9L105.7 354.0L104.3 353.5M131.2 346.0L115.7 344.3L113.9 345.3L111.9 344.1L111.3 343.0L111.7 341.1L112.1 339.3L111.8 337.7L111.4 336.9L110.4 336.0L111.1 334.6M131.2 346.0L113.7 349.5L113.3 348.6L111.2 347.8L110.2 346.7L108.5 345.6M131.2 346.0L112.5 332.0L111.2 331.8L109.9 330.7L110.4 329.5L112.2 329.5M131.2 346.0L117.6 355.9L116.8 357.3L115.0 356.7L113.5 355.0L113.9 353.7L112.6 351.9L111.6 350.1L111.4 349.0M131.2 346.0L120.1 355.7L120.1 357.5L118.5 358.4L118.1 360.4L116.4 360.5L115.8 362.5L114.5 362.8M131.2 346.0L116.7 354.8L115.8 354.9L115.2 355.4L114.3 357.4L115.5 358.4L116.6 360.2L118.8 360.3L119.4 361.0M131.2 346.0L105.2 341.6L102.9 341.8L102.4 341.1L100.7 340.4L99.2 340.5L97.3 339.5L96.6 339.9L96.1 341.5M131.2 346.0L114.0 336.4L112.4 335.9L111.0 335.0L110.0 333.5L108.3 332.6L106.3 332.9M131.2 346.0L106.8 335.8L105.7 334.6L105.4 332.9L104.5 331.5L103.4 331.1L102.6 330.6M131.2 346.0L104.7 332.7L105.0 331.6L105.8 331.1L105.5 330.1L103.8 330.1M131.2 346.0L114.3 344.6L113.4 344.9L112.6 346.7L111.6 346.8L111.1 348.8L112.2 350.8L113.1 352.5L114.7 353.7M131.2 346.0L112.1 347.1L111.3 349.0L112.6 350.2L114.5 351.3M131.2 346.0L113.0 360.1L111.8 359.5L110.4 357.7L109.7 358.1L108.5 357.8L107.2 358.1L106.1 358.6M131.2 346.0L112.7 334.2L112.4 332.6L114.1 331.6L114.9 332.2L115.8 332.4L116.6 330.3L116.1 329.1L116.0 326.8M131.2 346.0L117.7 352.2L117.0 354.3L117.2 356.3L116.3 357.0L114.1 356.0L113.2 356.2L112.5 358.4L114.5 359.5L116.2 358.7L116.2 357.6M131.2 346.0L116.3 341.8L114.9 340.7L113.6 340.2L113.5 338.4L112.1 337.3L111.3 338.0M131.2 346.0L108.2 342.7L107.8 343.4L106.6 342.9L106.5 341.9L106.3 340.9L106.0 339.8L106.2 338.8L107.4 337.8L107.0 336.4M131.2 346.0L102.5 346.2L101.9 344.1L103.0 343.5L102.7 341.6L101.5 341.5L101.3 340.4M131.2 346.0L110.5 362.7L110.1 364.0L111.5 364.8L112.8 364.7L115.0 363.9L116.2 364.3M131.2 346.0L108.7 348.6L108.2 347.3L107.3 346.2L104.9 346.5L104.8 348.2L103.6 348.6L102.2 348.6M131.2 346.0L115.3 352.5L115.3 354.3L117.1 354.9L118.8 354.9M131.2 346.0L110.9 340.2L108.6 340.8L108.8 342.8L107.5 343.8L105.3 344.7L104.5 346.3L103.2 346.9L101.8 346.7L100.1 346.3M131.2 346.0L112.7 341.0L111.9 339.3L113.2 337.8L113.3 335.6L114.5 335.0L116.1 334.5L116.5 335.3L116.1 336.7L116.7 337.6M131.2 346.0L106.9 351.0L105.7 350.0L104.8 348.1L106.1 346.3L105.2 345.2M131.2 346.0L107.4 333.1L105.5 332.6L104.2 332.7L102.6 332.2M131.2 346.0L107.7 353.2L105.7 354.5L104.2 354.6L102.1 354.8L101.3 354.2L100.7 352.9M131.2 346.0L113.4 345.4L111.3 345.2L109.9 346.2L110.4 347.3L110.6 348.6L110.7 350.8M131.2 346.0L114.2 352.5L114.1 354.4L113.1 354.9L111.5 356.3L110.2 356.8L110.4 358.3L111.3 360.0M131.2 346.0L104.0 312.0L101.5 312.3L98.0 311.7L95.6 312.0L91.8 311.9L88.3 313.8L85.9 314.2L83.6 313.8L80.9 315.8L79.0 317.9L76.5 320.6L75.0 321.2L72.4 321.8L69.0 322.8L66.5 323.9M131.2 346.0L100.0 350.0L97.9 348.4L95.7 346.7L94.7 343.7L94.9 341.2L92.7 338.9L90.7 336.1L90.4 334.3L89.4 333.0L89.3 331.3L86.8 329.0L85.7 327.7L84.5 324.7L83.8 323.2L83.6 320.6L84.0 316.7L86.2 313.7M131.2 346.0L108.0 330.0L105.9 331.1L104.6 331.7L102.6 330.8L100.3 330.8L97.0 332.3L94.4 333.3L92.9 334.0L90.4 336.7L87.0 337.8L85.5 339.1L85.3 341.9L85.8 344.5M131.2 346.0L112.0 300.0L110.5 297.4L108.0 294.9L104.4 294.0L102.9 293.4L100.0 293.3L97.1 293.7L95.2 294.7L93.0 294.5L89.8 293.0L87.7 291.5L87.2 288.9L88.0 287.5M131.2 346.0L120.0 286.0L119.3 283.0L116.1 281.1L113.2 281.9L110.6 284.6L108.0 286.9L105.6 289.0L103.5 289.9L101.3 292.7L101.3 296.5L102.1 298.0M131.2 346.0L126.0 285.0L123.9 282.2L124.4 279.7L125.3 277.8L128.3 276.6L129.2 275.2L130.4 274.2L132.7 274.1L135.2 272.6L137.1 270.5L137.5 266.7M131.2 346.0L140.0 287.0L139.9 283.4L137.8 280.6L138.3 278.2L136.8 276.2L136.1 274.3L135.6 272.7L134.4 269.5L132.9 266.7M131.2 346.0L106.0 372.0L103.9 374.9L104.1 378.7L101.2 381.2L99.4 382.6L97.5 385.4L95.3 388.5L95.6 391.2L94.0 393.7L93.0 395.2L93.1 397.3L90.9 400.2L90.2 403.9M131.2 346.0L110.0 392.0L109.4 394.9L107.4 396.2L104.4 395.4L102.4 396.6L100.7 397.9L98.8 398.3L96.7 397.6L94.1 398.9L93.0 401.5L90.7 403.4L89.5 404.5L88.2 405.6M131.2 346.0L118.0 408.0L117.0 409.5L115.4 411.3L113.8 414.0L114.0 416.0L112.5 417.7L109.0 418.7L107.2 419.2L105.3 422.4L105.6 425.1L105.8 426.9M131.2 346.0L130.0 409.0L130.1 410.9L130.0 413.7L130.4 415.6L131.1 417.5L132.9 418.5L133.9 421.1L133.5 422.6L131.0 423.7L128.1 423.5L126.2 422.7L125.0 421.3L123.5 420.6L120.8 419.9L117.1 420.4M131.2 346.0L141.0 408.0L143.5 409.5L146.5 409.8L149.2 411.6L151.3 411.1L155.2 411.0L157.3 408.7L160.3 407.0L162.8 404.5L165.3 401.6L164.7 397.9L163.9 395.5L162.0 394.5M131.2 346.0L150.0 404.0L150.5 407.2L152.1 408.8L154.1 409.1L156.3 408.3L159.8 410.2L161.2 412.5L163.0 415.5L162.4 418.8M131.2 346.0L150.0 300.0L151.6 298.8L154.9 297.4L156.6 297.5L158.7 298.7L162.6 298.2L165.9 298.9L169.1 297.3L172.7 298.5M131.2 346.0L97.0 340.0L93.9 338.3L92.4 335.7L90.2 332.9L89.7 329.2L87.9 325.8L86.2 322.3L82.7 320.6L81.5 318.9L81.5 316.8L80.1 314.5L77.8 313.1L76.9 310.0M131.2 346.0L104.0 318.0L102.3 316.2L101.6 312.8L102.0 308.9L103.6 307.0L103.4 303.9L104.7 301.9L107.0 299.2L108.5 298.7L109.9 298.2L111.7 295.2M131.2 346.0L242.0 221.5L242.9 220.0L242.1 217.9L240.3 217.5L239.0 217.3L236.1 218.0M131.2 346.0L246.0 227.0L247.9 226.4L250.5 226.5L252.2 224.7M131.2 346.0L250.8 233.3L252.2 230.9L252.6 229.1M131.2 346.0L255.5 231.0L256.3 229.6L258.5 229.3L259.9 230.6M131.2 346.0L260.5 229.3L261.6 226.7L263.6 225.7L266.4 226.8L267.6 227.0L268.3 228.1M131.2 346.0L238.0 228.0L239.6 225.8L239.6 224.0L237.9 222.7M131.2 346.0L248.0 230.0L247.8 227.5L246.6 225.9L245.5 224.5L243.9 223.9L241.4 224.1M131.2 346.0L242.0 221.5L243.5 218.5L241.0 218.0L244.5 219.5M131.2 346.0L160.0 344.0L318.4 232.3L320.8 226.0L320.2 221.5M131.2 346.0L191.0 338.0L266.0 323.0M131.2 346.0L150.0 331.0L154.4 276.8L151.6 290.7M131.2 346.0L170.0 333.0L283.0 311.0L300.0 300.0M131.2 346.0L311.5 327.8L340.0 307.0L343.0 311.0L346.0 309.0M131.2 346.0L215.0 336.0L352.0 322.0L356.0 326.0L360.0 323.0M131.2 346.0L364.0 392.5L368.0 391.0L372.0 393.5M131.2 346.0L348.0 384.0L352.0 386.0L355.0 383.5M131.2 346.0L246.5 403.5L241.0 382.0M131.2 346.0L200.0 368.0L247.0 403.0L226.0 390.0M162.3 392.5L200.8 359.4L230.0 352.0M131.2 346.0L162.0 360.0L170.0 372.0L166.0 378.0"/></svg>
<div style="left:709.60px;top:98.00px;width:369.40px;height:464.00px;background:#f0f0f0;box-shadow:0 1px 5px rgba(0,0,0,.4);"></div>
<div style="left:709.60px;top:559.60px;width:369.40px;height:2.40px;background:#f7f7f7;"></div>
<div style="left:709.60px;top:98.00px;width:369.40px;height:28.60px;background:#fff;border-bottom:1px solid #b8b8b8;"></div>
<svg style="position:absolute;left:1000px;top:99px" width="78" height="16" viewBox="0 0 78 16"><g stroke="#555" stroke-width="0.8" fill="none"><path d="M10 7.4H16.4"/><rect x="36.2" y="4.2" width="5.8" height="5.8"/><path d="M62.3 4.2L68.6 10.4M68.6 4.2L62.3 10.4"/></g></svg>
<span class="t" style="left:909.50px;top:132.66px;font-size:7.0px;color:#111;transform:scaleX(0.9011);">g the input on Save-Update)</span>
<div style="left:717.40px;top:152.00px;width:346.40px;height:399.60px;background:#ffff00;border-top:1px solid #7a7a7a;border-left:1px solid #6a6a3a;box-sizing:border-box;"></div>
<div style="left:1063.80px;top:152.00px;width:9.40px;height:399.60px;background:#f0f0f0;border-top:1px solid #7a7a7a;box-sizing:border-box;"></div>
<div style="left:1073.10px;top:152.00px;width:2.20px;height:400.60px;background:#fafafa;"></div>
<div style="left:717.40px;top:551.60px;width:357.90px;height:1.00px;background:#fafafa;"></div>
<div style="left:1064.30px;top:163.00px;width:8.70px;height:36.70px;background:#cdcdcd;"></div>
<svg style="position:absolute;left:1064px;top:153px" width="10" height="398" viewBox="0 0 10 398"><g stroke="#444" stroke-width="1" fill="none"><path d="M2.6 6.6L5.1 4L7.6 6.6"/><path d="M2.6 392.4L5.1 395L7.6 392.4"/></g></svg>
<div id="ed" style="left:718.9px;top:153.1px;width:344px;height:398px;overflow:hidden;font-size:6.76px">
<span class="m" style="top:19.04px">....:....!....:....!....:....!....:....!....:....!....:....!....:....!....:....!</span>
<span class="m" style="top:26.71px">        10        20        30        40        50        60        70        80</span>
<span class="m" style="top:183.72px">c      Atomic weight ratio in neutron mass units of 1.008664967.</span>
<span class="m" style="top:192.42px">c                                               (Based on neutron mass)</span>
<span class="m" style="top:201.12px">c</span>
<span class="m" style="top:209.82px">c Notes:</span>
<span class="m" style="top:218.52px">c Geometry:</span>
<span class="m" style="top:227.22px">c</span>
<span class="m" style="top:235.92px">c</span>
<span class="m" style="top:244.62px">c</span>
<span class="m" style="top:253.32px">c ==============================================================================</span>
<span class="m" style="top:262.02px">c ==============================================================================</span>
<span class="m" style="top:270.72px">c</span>
<span class="m" style="top:279.42px">c  CCCCC  EEEEEEE LL      LL       SSSSS</span>
<span class="m" style="top:288.12px">c CC    C EE      LL      LL      SS</span>
<span class="m" style="top:296.82px">c CC      EEEEE   LL      LL       SSSSS</span>
<span class="m" style="top:305.52px">c CC    C EE      LL      LL           SS</span>
<span class="m" style="top:314.22px">c  CCCCC  EEEEEEE LLLLLLL LLLLLLL  SSSSS</span>
<span class="m" style="top:322.92px">c</span>
<span class="m" style="top:331.62px">c ccc=cell number, mmm=material number</span>
<span class="m" style="top:340.32px">c material density,&quot;-&quot;=&gt;g/cm^3</span>
<span class="m" style="top:349.02px">c then list of surfaces, &quot;-&quot;=&gt; inside the surface</span>
<span class="m" style="top:357.72px">c</span>
<span class="m" style="top:366.42px">c ccc   mmm  density surface numbers...</span>
<span class="m" style="top:375.12px">c</span>
<span class="m" style="top:383.82px">c Detectors</span>
<span class="m" style="top:392.52px">   20     0         -120  $ Center Detector</span>
</div>
<div style="left:503.80px;top:36.80px;width:405.80px;height:325.60px;background:#f0f0f0;border:1px solid #b2b2b2;box-sizing:border-box;box-shadow:0 1px 6px rgba(0,0,0,.36);"></div>
<div style="left:504.80px;top:37.80px;width:403.80px;height:24.20px;background:#fff;"></div>
<span class="t" style="left:506.20px;top:39.69px;font-size:7.6px;color:#9c9c9c;transform:scaleX(0.9244);-webkit-text-stroke:0;">Particle Track Plotting -- Click help for more information</span>
<svg style="position:absolute;left:830px;top:38px" width="78" height="14" viewBox="0 0 78 14"><g stroke-width="0.8" fill="none"><path d="M10 6.5H16.2" stroke="#666"/><rect x="36.4" y="3.5" width="5.4" height="5.3" stroke="#dedede"/><path d="M63 3.2L69 9.1M69 3.2L63 9.1" stroke="#666"/></g></svg>
<span class="t" style="left:508.70px;top:53.15px;font-size:7.5px;color:#505050;transform:scaleX(0.8605);-webkit-text-stroke:0;">Close</span>
<span class="t" style="left:533.50px;top:53.15px;font-size:7.5px;color:#505050;transform:scaleX(0.8688);-webkit-text-stroke:0;">Plot_Source</span>
<span class="t" style="left:577.60px;top:53.15px;font-size:7.5px;color:#505050;transform:scaleX(0.8495);-webkit-text-stroke:0;">Plot_Tracks</span>
<span class="t" style="left:619.00px;top:53.15px;font-size:7.5px;color:#505050;transform:scaleX(0.8166);-webkit-text-stroke:0;">Reset</span>
<span class="t" style="left:643.60px;top:53.15px;font-size:7.5px;color:#505050;transform:scaleX(0.8525);-webkit-text-stroke:0;">Save Parameters</span>
<span class="t" style="left:701.80px;top:53.15px;font-size:7.5px;color:#505050;transform:scaleX(0.9206);-webkit-text-stroke:0;">Help</span>
<span class="t" style="left:509.60px;top:71.42px;font-size:6.1px;color:#0a0ac4;transform:scaleX(0.8975);">Current Directory =</span>
<div class="sk" style="left:558.60px;top:70.00px;width:344.40px;height:10.60px;background:#f8f8f8;"></div>
<span class="t" style="left:528.00px;top:89.02px;font-size:6.1px;color:#0a0ac4;transform:scaleX(0.8897);">Filename =</span>
<div class="sk" style="left:558.60px;top:87.20px;width:344.40px;height:10.80px;background:#f4f4f4;"></div>
<span class="t" style="left:560.60px;top:89.39px;font-size:5.5px;color:#555;transform:scaleX(0.9788);-webkit-text-stroke:0;">2024-04-27_Shielded-He-0_psi.txt</span>
<span class="t" style="left:540.60px;top:104.02px;font-size:6.1px;color:#0a0ac4;transform:scaleX(0.8961);">Particles Plotted (NPS)</span>
<div class="sk" style="left:602.00px;top:102.30px;width:48.00px;height:10.70px;background:#f0f0f0;"></div>
<span class="t" style="left:605.00px;top:104.44px;font-size:5.5px;color:#7c7c7c;-webkit-text-stroke:0;">500</span>
<span class="t" style="left:679.40px;top:102.22px;font-size:6.1px;color:#0a0ac4;transform:scaleX(0.8998);">Points Plotted =</span>
<div class="sk" style="left:723.30px;top:101.40px;width:48.50px;height:11.00px;background:#f0f0f0;"></div>
<span class="t" style="left:726.50px;top:103.69px;font-size:5.5px;color:#7c7c7c;-webkit-text-stroke:0;">2591</span>
<span class="t" style="left:509.60px;top:120.12px;font-size:6.1px;color:#0a0ac4;transform:scaleX(0.9048);">Number of Particles to Plot =</span>
<div class="sk" style="left:585.60px;top:118.70px;width:48.40px;height:10.60px;background:#fff;"></div>
<span class="t" style="left:587.60px;top:120.79px;font-size:5.5px;color:#2049c8;">500</span>
<span class="t" style="left:638.80px;top:119.42px;font-size:6.1px;color:#0a0ac4;transform:scaleX(0.9041);">Distance from the Plot Plane (cm) =</span>
<div class="sk" style="left:730.40px;top:117.00px;width:48.50px;height:11.30px;background:#fff;"></div>
<span class="t" style="left:732.40px;top:119.44px;font-size:5.5px;color:#2049c8;">5</span>
<div class="sk" style="left:782.00px;top:120.00px;width:7.00px;height:7.00px;background:#fff;"></div>
<span class="t" style="left:792.00px;top:119.32px;font-size:6.1px;color:#0a0ac4;transform:scaleX(0.8763);">Regenerate when plot changes</span>
<span class="t" style="left:510.00px;top:135.72px;font-size:6.1px;color:#0a0ac4;transform:scaleX(0.8710);">Display =</span>
<div class="sk" style="left:537.80px;top:134.50px;width:128.90px;height:10.50px;background:#fff;"></div>
<span class="t" style="left:540.30px;top:136.09px;font-size:5.9px;color:#2049c8;transform:scaleX(0.9221);">Source + Collision</span>
<div class="cbtn" style="left:657.10px;top:135.30px;width:9.80px;height:9.30px;"><i class="tri" style="left:1.60px;top:2.95px"></i></div>
<span class="t" style="left:676.50px;top:135.22px;font-size:6.1px;color:#0a0ac4;transform:scaleX(0.8901);">Color By =</span>
<div class="sk" style="left:703.30px;top:134.00px;width:57.30px;height:10.70px;background:#fff;"></div>
<span class="t" style="left:705.80px;top:135.69px;font-size:5.9px;color:#2049c8;">Energy</span>
<div class="cbtn" style="left:751.00px;top:134.80px;width:9.80px;height:9.50px;"><i class="tri" style="left:1.60px;top:3.05px"></i></div>
<span class="t" style="left:577.60px;top:150.07px;font-size:5.7px;color:#0a0ac4;transform:scaleX(0.9582);">Click on the column heading for additional information on what each column represents</span>
<div style="left:510.00px;top:157.30px;width:393.00px;height:68.80px;background:#fff;border-left:1px solid #6e6e6e;border-top:1px solid #6e6e6e;box-sizing:border-box;"></div>
<div style="left:511.00px;top:158.20px;width:392.00px;height:8.40px;background:#f0f0f0;border-bottom:1px solid #8a8a8a;"></div>
<div style="left:511.00px;top:167.40px;width:391.60px;height:9.80px;background:#f0f0f0;"></div>
<div style="left:513.00px;top:168.20px;width:7.50px;height:8.40px;background:#fff;"></div>
<div style="left:533.10px;top:158.20px;width:1.00px;height:8.60px;background:#8a8a8a;"></div>
<div style="left:534.10px;top:158.20px;width:0.80px;height:8.20px;background:#fff;"></div>
<div style="left:533.60px;top:167.40px;width:0.80px;height:58.40px;background:#ededed;"></div>
<div style="left:556.30px;top:158.20px;width:1.00px;height:8.60px;background:#8a8a8a;"></div>
<div style="left:557.30px;top:158.20px;width:0.80px;height:8.20px;background:#fff;"></div>
<div style="left:556.80px;top:167.40px;width:0.80px;height:58.40px;background:#ededed;"></div>
<div style="left:579.30px;top:158.20px;width:1.00px;height:8.60px;background:#8a8a8a;"></div>
<div style="left:580.30px;top:158.20px;width:0.80px;height:8.20px;background:#fff;"></div>
<div style="left:579.80px;top:167.40px;width:0.80px;height:58.40px;background:#ededed;"></div>
<div style="left:626.50px;top:158.20px;width:1.00px;height:8.60px;background:#8a8a8a;"></div>
<div style="left:627.50px;top:158.20px;width:0.80px;height:8.20px;background:#fff;"></div>
<div style="left:627.00px;top:167.40px;width:0.80px;height:58.40px;background:#ededed;"></div>
<div style="left:673.70px;top:158.20px;width:1.00px;height:8.60px;background:#8a8a8a;"></div>
<div style="left:674.70px;top:158.20px;width:0.80px;height:8.20px;background:#fff;"></div>
<div style="left:674.20px;top:167.40px;width:0.80px;height:58.40px;background:#ededed;"></div>
<div style="left:696.50px;top:158.20px;width:1.00px;height:8.60px;background:#8a8a8a;"></div>
<div style="left:697.50px;top:158.20px;width:0.80px;height:8.20px;background:#fff;"></div>
<div style="left:697.00px;top:167.40px;width:0.80px;height:58.40px;background:#ededed;"></div>
<div style="left:719.80px;top:158.20px;width:1.00px;height:8.60px;background:#8a8a8a;"></div>
<div style="left:720.80px;top:158.20px;width:0.80px;height:8.20px;background:#fff;"></div>
<div style="left:720.30px;top:167.40px;width:0.80px;height:58.40px;background:#ededed;"></div>
<div style="left:758.50px;top:158.20px;width:1.00px;height:8.60px;background:#8a8a8a;"></div>
<div style="left:759.50px;top:158.20px;width:0.80px;height:8.20px;background:#fff;"></div>
<div style="left:759.00px;top:167.40px;width:0.80px;height:58.40px;background:#ededed;"></div>
<div style="left:797.40px;top:158.20px;width:1.00px;height:8.60px;background:#8a8a8a;"></div>
<div style="left:798.40px;top:158.20px;width:0.80px;height:8.20px;background:#fff;"></div>
<div style="left:797.90px;top:167.40px;width:0.80px;height:58.40px;background:#ededed;"></div>
<div style="left:836.20px;top:158.20px;width:1.00px;height:8.60px;background:#8a8a8a;"></div>
<div style="left:837.20px;top:158.20px;width:0.80px;height:8.20px;background:#fff;"></div>
<div style="left:836.70px;top:167.40px;width:0.80px;height:58.40px;background:#ededed;"></div>
<div style="left:875.00px;top:158.20px;width:1.00px;height:8.60px;background:#8a8a8a;"></div>
<div style="left:876.00px;top:158.20px;width:0.80px;height:8.20px;background:#fff;"></div>
<div style="left:875.50px;top:167.40px;width:0.80px;height:58.40px;background:#ededed;"></div>
<div style="left:898.00px;top:158.20px;width:1.00px;height:8.60px;background:#8a8a8a;"></div>
<div style="left:899.00px;top:158.20px;width:0.80px;height:8.20px;background:#fff;"></div>
<div style="left:898.50px;top:167.40px;width:0.80px;height:58.40px;background:#ededed;"></div>
<div style="left:511.00px;top:177.20px;width:391.60px;height:0.80px;background:#ededed;"></div>
<div style="left:511.00px;top:187.00px;width:391.60px;height:0.80px;background:#ededed;"></div>
<div style="left:511.00px;top:197.00px;width:391.60px;height:0.80px;background:#ededed;"></div>
<div style="left:511.00px;top:207.00px;width:391.60px;height:0.80px;background:#ededed;"></div>
<div style="left:511.00px;top:217.00px;width:391.60px;height:0.80px;background:#ededed;"></div>
<div style="left:902.60px;top:158.00px;width:0.80px;height:68.00px;background:#fff;"></div>
<span class="t" style="left:513.80px;top:158.64px;font-size:5.9px;color:#111;">Type</span>
<span class="t" style="left:537.00px;top:158.64px;font-size:5.9px;color:#111;">Show</span>
<span class="t" style="left:560.20px;top:158.64px;font-size:5.9px;color:#111;">Use</span>
<span class="t" style="left:583.20px;top:158.64px;font-size:5.9px;color:#111;">Min</span>
<span class="t" style="left:630.40px;top:158.64px;font-size:5.9px;color:#111;">Max</span>
<span class="t" style="left:677.60px;top:158.64px;font-size:5.9px;color:#111;">Size</span>
<span class="t" style="left:700.40px;top:158.64px;font-size:5.9px;color:#111;">tracks</span>
<span class="t" style="left:723.70px;top:158.64px;font-size:5.9px;color:#111;">Min Col</span>
<span class="t" style="left:762.40px;top:158.64px;font-size:5.9px;color:#111;">Max Col</span>
<span class="t" style="left:801.30px;top:158.64px;font-size:5.9px;color:#111;">Track Col</span>
<span class="t" style="left:840.10px;top:158.64px;font-size:5.9px;color:#111;">Track Thick</span>
<span class="t" style="left:878.90px;top:158.64px;font-size:5.9px;color:#111;">Border</span>
<span class="t" style="left:521.60px;top:169.53px;font-size:5.6px;color:#222;">n</span>
<span class="t" style="left:537.00px;top:169.53px;font-size:5.6px;color:#222;">X</span>
<span class="t" style="left:583.20px;top:169.53px;font-size:5.6px;color:#222;">0</span>
<span class="t" style="left:630.60px;top:169.53px;font-size:5.6px;color:#222;">1e+020</span>
<span class="t" style="left:677.80px;top:169.53px;font-size:5.6px;color:#222;">0</span>
<span class="t" style="left:700.60px;top:169.53px;font-size:5.6px;color:#222;">X</span>
<span class="t" style="left:733.80px;top:169.53px;font-size:5.6px;color:#222;">min col</span>
<span class="t" style="left:772.40px;top:169.53px;font-size:5.6px;color:#222;">max col</span>
<span class="t" style="left:811.20px;top:169.53px;font-size:5.6px;color:#222;">track col</span>
<span class="t" style="left:840.20px;top:169.53px;font-size:5.6px;color:#222;">0</span>
<span class="t" style="left:879.00px;top:169.53px;font-size:5.6px;color:#222;">X</span>
<div style="left:721.50px;top:168.40px;width:8.40px;height:8.60px;background:#0000ff;border:1px solid #222;box-sizing:border-box;"></div>
<div style="left:760.40px;top:168.40px;width:8.40px;height:8.60px;background:#ff0000;border:1px solid #222;box-sizing:border-box;"></div>
<div style="left:799.20px;top:168.40px;width:8.40px;height:8.60px;background:#00ff00;border:1px solid #222;box-sizing:border-box;"></div>
<div style="left:509.30px;top:233.60px;width:361.30px;height:29.20px;border:1px solid #bcbcbc;box-sizing:border-box;box-shadow:inset -1px -1px 0 #fafafa, 1px 1px 0 #fafafa;"></div>
<div style="left:513.90px;top:230.60px;width:19.00px;height:6.00px;background:#f0f0f0;"></div>
<span class="t" style="left:515.10px;top:230.28px;font-size:6.0px;color:#0a0ac4;transform:scaleX(0.9000);">Tracks</span>
<span class="t" style="left:515.00px;top:238.42px;font-size:6.1px;color:#0a0ac4;transform:scaleX(0.9367);">only for NPS =</span>
<div class="sk" style="left:555.60px;top:237.60px;width:306.40px;height:10.00px;background:#fff;"></div>
<div class="sk" style="left:515.20px;top:253.30px;width:7.00px;height:7.00px;background:#fff;"></div>
<span class="t" style="left:524.80px;top:253.08px;font-size:6.0px;color:#0a0ac4;transform:scaleX(0.9119);">Show top 5 Max Energy tracks</span>
<div class="sk" style="left:608.50px;top:253.30px;width:7.00px;height:7.00px;background:#fff;"></div>
<span class="t" style="left:618.20px;top:253.08px;font-size:6.0px;color:#0a0ac4;transform:scaleX(0.9057);">Show top 5 Max Weight Tracks</span>
<div style="left:509.30px;top:270.20px;width:361.30px;height:17.60px;border:1px solid #bcbcbc;box-sizing:border-box;box-shadow:inset -1px -1px 0 #fafafa, 1px 1px 0 #fafafa;"></div>
<div style="left:513.90px;top:267.20px;width:14.00px;height:6.00px;background:#f0f0f0;"></div>
<span class="t" style="left:515.10px;top:266.08px;font-size:6.0px;color:#0a0ac4;transform:scaleX(0.9164);">Tally</span>
<div class="sk" style="left:515.80px;top:276.00px;width:7.00px;height:7.00px;background:#fff;"></div>
<span class="t" style="left:526.00px;top:274.92px;font-size:6.1px;color:#0a0ac4;transform:scaleX(0.8973);">Tally Contributions Only</span>
<span class="t" style="left:600.20px;top:274.42px;font-size:6.1px;color:#0a0ac4;transform:scaleX(0.8959);">Tally Number =</span>
<div class="sk" style="left:643.00px;top:273.00px;width:28.50px;height:11.00px;background:#fff;"></div>
<span class="t" style="left:697.70px;top:274.42px;font-size:6.1px;color:#0a0ac4;transform:scaleX(0.8631);">Segment Number =</span>
<div class="sk" style="left:747.50px;top:273.00px;width:27.50px;height:11.00px;background:#fff;"></div>
<div class="sk" style="left:509.70px;top:293.00px;width:393.20px;height:53.60px;background:#66ccff;"></div>
<div style="left:892.30px;top:294.00px;width:10.10px;height:52.20px;background:#f0f0f0;"></div>
<div style="left:893.10px;top:327.10px;width:8.60px;height:9.30px;background:#cdcdcd;"></div>
<svg style="position:absolute;left:892.4px;top:294px" width="10" height="52" viewBox="0 0 10 52"><g stroke="#444" stroke-width="1" fill="none"><path d="M2.6 6.2L5 3.7L7.4 6.2"/><path d="M2.6 46.2L5 48.7L7.4 46.2"/></g></svg>
<span class="t" style="left:511.00px;top:300.84px;font-size:5.9px;color:#0c1a2a;transform:scaleX(0.9418);">Particle type = n</span>
<span class="t" style="left:511.00px;top:307.79px;font-size:5.9px;color:#0c1a2a;transform:scaleX(0.9152);">Minimum Weight Found = 0.267804</span>
<span class="t" style="left:511.00px;top:314.74px;font-size:5.9px;color:#0c1a2a;transform:scaleX(0.9155);">Maximum Weight Found = 1</span>
<span class="t" style="left:511.00px;top:321.69px;font-size:5.9px;color:#0c1a2a;transform:scaleX(0.9210);">Minimum Energy Found = 1.0855e-009</span>
<span class="t" style="left:511.00px;top:328.64px;font-size:5.9px;color:#0c1a2a;transform:scaleX(0.9263);">Maximum Energy Found = 2.45</span>
<div style="left:1.00px;top:591.60px;width:1104.00px;height:11.60px;background:#f0f0f0;"></div>
<span class="t" style="left:2.60px;top:594.18px;font-size:6.8px;color:#000;transform:scaleX(0.8648);-webkit-text-stroke:0.05px;">Ready</span>
<div style="left:1036.50px;top:593.60px;width:16.50px;height:8.80px;border:1px solid;border-color:#a0a0a0 #fff #fff #a0a0a0;box-sizing:border-box;"></div>
<div style="left:1054.60px;top:593.60px;width:19.40px;height:8.80px;border:1px solid;border-color:#a0a0a0 #fff #fff #a0a0a0;box-sizing:border-box;"></div>
<div style="left:1076.00px;top:593.60px;width:18.00px;height:8.80px;border:1px solid;border-color:#a0a0a0 #fff #fff #a0a0a0;box-sizing:border-box;"></div>
<span class="t" style="left:1056.00px;top:594.21px;font-size:6.6px;color:#000;transform:scaleX(1.0312);-webkit-text-stroke:0.05px;">NUM</span>
<svg style="position:absolute;left:1095px;top:594px" width="9" height="9" viewBox="0 0 9 9"><g stroke="#a8a8a8" stroke-width="0.9"><path d="M8.5 1L1 8.5M8.5 4L4 8.5M8.5 7L7 8.5"/></g></svg>
</body></html>
